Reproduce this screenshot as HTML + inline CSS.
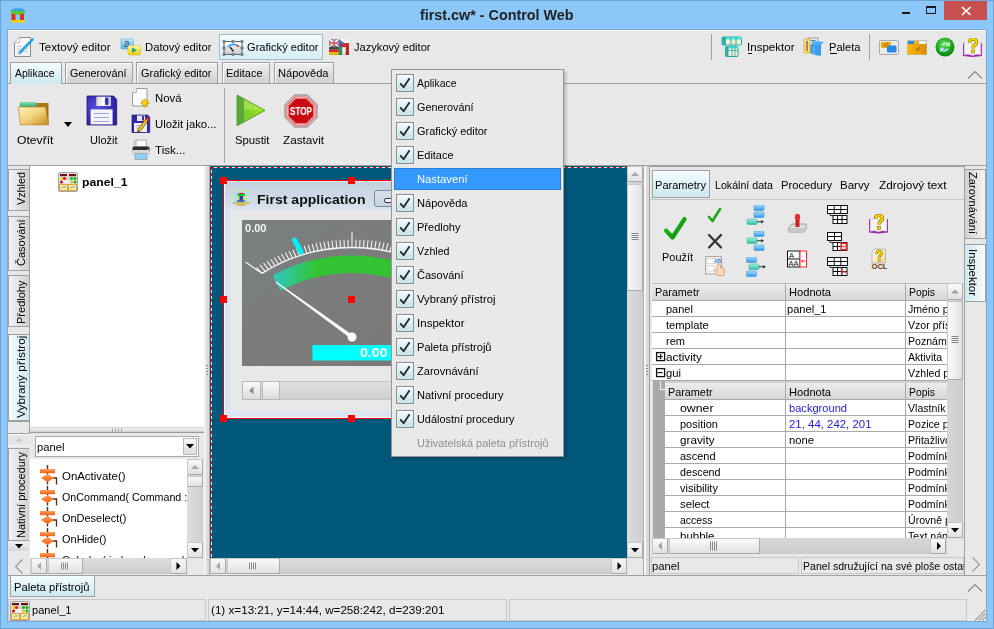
<!DOCTYPE html>
<html><head><meta charset="utf-8"><style>
html,body{margin:0;padding:0;width:994px;height:629px;overflow:hidden;background:#8cc7f9;font-family:"Liberation Sans", sans-serif;}
div,svg{box-sizing:border-box;}
</style></head><body>
<div style="position:absolute;left:0px;top:0px;width:994px;height:629px;border:1px solid #6fa3d6;"></div>
<svg style="position:absolute;left:8px;top:5px;" width="20" height="20" viewBox="0 0 20 20">
<defs><linearGradient id="groof" x1="0" y1="0" x2="0" y2="1"><stop offset="0" stop-color="#50c0f0"/><stop offset="1" stop-color="#2a90d8"/></linearGradient></defs>
<path d="M2.5 6.5 Q4 3 10 2.5 Q16 3 17.5 6.5 Z" fill="url(#groof)"/>
<rect x="3" y="6" width="13.5" height="3.2" fill="#58c828"/>
<rect x="3.5" y="9" width="4" height="6.5" fill="#e83010"/><rect x="12" y="9" width="4" height="6.5" fill="#e83010"/>
<path d="M7.5 9.2 H12 V11.5 Q12 8 9.75 7.5 Q7.5 8 7.5 11.5 Z" fill="#58c828"/>
<rect x="3" y="15" width="14" height="2.6" fill="#f0d010"/></svg>
<div style="position:absolute;left:7px;top:29px;width:980px;height:593px;border:1px solid #79a9d6;"></div>
<div style="position:absolute;left:420px;top:6.0px;height:18px;line-height:18px;font-size:14px;font-weight:bold;color:#222;white-space:nowrap;transform:scaleX(1.0243);transform-origin:0 0;">first.cw* - Control Web</div>
<div style="position:absolute;left:902px;top:12px;width:8px;height:2px;background:#1a1a1a;"></div>
<div style="position:absolute;left:926px;top:6px;width:10px;height:8px;border:1px solid #1a1a1a;border-top:2px solid #1a1a1a;"></div>
<div style="position:absolute;left:944px;top:1px;width:43px;height:19px;background:#c75050;"></div>
<svg style="position:absolute;left:960px;top:5px;" width="12" height="12" viewBox="0 0 12 12"><path d="M2 2 L10.5 10 M10.5 2 L2 10" stroke="#fff" stroke-width="1.7"/></svg>
<div style="position:absolute;left:8px;top:30px;width:978px;height:591px;background:#e8e8e8;border-top:1px solid #fdfdfd;"></div>
<div style="position:absolute;left:39px;top:40.0px;height:14px;line-height:14px;font-size:11.5px;font-weight:normal;color:#000;white-space:nowrap;transform:scaleX(1.0078);transform-origin:0 0;">Textový editor</div>
<div style="position:absolute;left:145px;top:40.0px;height:14px;line-height:14px;font-size:11.5px;font-weight:normal;color:#000;white-space:nowrap;transform:scaleX(0.9815);transform-origin:0 0;">Datový editor</div>
<div style="position:absolute;left:219px;top:34px;width:104px;height:26px;border:1px solid #a4bcc8;background:linear-gradient(#f2fbfe,#d6eef6);"></div>
<div style="position:absolute;left:247px;top:40.0px;height:14px;line-height:14px;font-size:11.5px;font-weight:normal;color:#000;white-space:nowrap;transform:scaleX(0.9645);transform-origin:0 0;">Grafický editor</div>
<div style="position:absolute;left:354px;top:40.0px;height:14px;line-height:14px;font-size:11.5px;font-weight:normal;color:#000;white-space:nowrap;transform:scaleX(0.9653);transform-origin:0 0;">Jazykový editor</div>
<div style="position:absolute;left:711px;top:34px;width:1px;height:26px;background:#a0a0a0;"></div>
<div style="position:absolute;left:747px;top:40.0px;height:14px;line-height:14px;font-size:11.5px;font-weight:normal;color:#000;white-space:nowrap;transform:scaleX(1.0042);transform-origin:0 0;">Inspektor</div>
<div style="position:absolute;left:748px;top:53px;width:4px;height:1px;background:#000;"></div>
<div style="position:absolute;left:829px;top:40.0px;height:14px;line-height:14px;font-size:11.5px;font-weight:normal;color:#000;white-space:nowrap;transform:scaleX(0.9660);transform-origin:0 0;">Paleta</div>
<div style="position:absolute;left:830px;top:53px;width:7px;height:1px;background:#000;"></div>
<div style="position:absolute;left:869px;top:34px;width:1px;height:26px;background:#a0a0a0;"></div>
<div style="position:absolute;left:8px;top:83px;width:978px;height:1px;background:#a0a0a0;"></div>
<div style="position:absolute;left:10px;top:62px;width:52px;height:22px;border:1px solid #a0a0a0;border-bottom:none;background:linear-gradient(#f4fcfe,#cce8f0);"></div>
<div style="position:absolute;left:15px;top:66.0px;height:14px;line-height:14px;font-size:11.5px;font-weight:normal;color:#000;white-space:nowrap;transform:scaleX(0.9087);transform-origin:0 0;">Aplikace</div>
<div style="position:absolute;left:65px;top:62px;width:68px;height:21px;border:1px solid #a0a0a0;border-bottom:none;background:linear-gradient(#f0f0f0,#cfcfcf);box-shadow:inset 1px 1px 0 #fff;"></div>
<div style="position:absolute;left:69.5px;top:66.0px;height:14px;line-height:14px;font-size:11.5px;font-weight:normal;color:#000;white-space:nowrap;transform:scaleX(0.9402);transform-origin:0 0;">Generování</div>
<div style="position:absolute;left:136px;top:62px;width:82px;height:21px;border:1px solid #a0a0a0;border-bottom:none;background:linear-gradient(#f0f0f0,#cfcfcf);box-shadow:inset 1px 1px 0 #fff;"></div>
<div style="position:absolute;left:140.5px;top:66.0px;height:14px;line-height:14px;font-size:11.5px;font-weight:normal;color:#000;white-space:nowrap;transform:scaleX(0.9510);transform-origin:0 0;">Grafický editor</div>
<div style="position:absolute;left:222px;top:62px;width:48px;height:21px;border:1px solid #a0a0a0;border-bottom:none;background:linear-gradient(#f0f0f0,#cfcfcf);box-shadow:inset 1px 1px 0 #fff;"></div>
<div style="position:absolute;left:226px;top:66.0px;height:14px;line-height:14px;font-size:11.5px;font-weight:normal;color:#000;white-space:nowrap;transform:scaleX(0.9516);transform-origin:0 0;">Editace</div>
<div style="position:absolute;left:274px;top:62px;width:60px;height:21px;border:1px solid #a0a0a0;border-bottom:none;background:linear-gradient(#f0f0f0,#cfcfcf);box-shadow:inset 1px 1px 0 #fff;"></div>
<div style="position:absolute;left:277.5px;top:66.0px;height:14px;line-height:14px;font-size:11.5px;font-weight:normal;color:#000;white-space:nowrap;transform:scaleX(0.9632);transform-origin:0 0;">Nápověda</div>
<svg style="position:absolute;left:967px;top:70px;" width="16" height="10" viewBox="0 0 16 10"><path d="M1 8.5 L8 1.5 L15 8.5" stroke="#8a8a8a" stroke-width="1.2" fill="none"/></svg>
<div style="position:absolute;left:17px;top:133.0px;height:14px;line-height:14px;font-size:11.5px;font-weight:normal;color:#000;white-space:nowrap;transform:scaleX(1.0578);transform-origin:0 0;">Otevřít</div>
<div style="position:absolute;left:90px;top:133.0px;height:14px;line-height:14px;font-size:11.5px;font-weight:normal;color:#000;white-space:nowrap;transform:scaleX(0.9563);transform-origin:0 0;">Uložit</div>
<div style="position:absolute;left:154.5px;top:91.0px;height:14px;line-height:14px;font-size:11.5px;font-weight:normal;color:#000;white-space:nowrap;transform:scaleX(0.9871);transform-origin:0 0;">Nová</div>
<div style="position:absolute;left:154.5px;top:117.0px;height:14px;line-height:14px;font-size:11.5px;font-weight:normal;color:#000;white-space:nowrap;transform:scaleX(0.9819);transform-origin:0 0;">Uložit jako...</div>
<div style="position:absolute;left:154.5px;top:143.0px;height:14px;line-height:14px;font-size:11.5px;font-weight:normal;color:#000;white-space:nowrap;transform:scaleX(1.0087);transform-origin:0 0;">Tisk...</div>
<div style="position:absolute;left:224px;top:88px;width:1px;height:75px;background:#a8a8a8;"></div>
<div style="position:absolute;left:235px;top:133.0px;height:14px;line-height:14px;font-size:11.5px;font-weight:normal;color:#000;white-space:nowrap;transform:scaleX(0.9813);transform-origin:0 0;">Spustit</div>
<div style="position:absolute;left:282.5px;top:133.0px;height:14px;line-height:14px;font-size:11.5px;font-weight:normal;color:#000;white-space:nowrap;transform:scaleX(1.0183);transform-origin:0 0;">Zastavit</div>
<svg style="position:absolute;left:64px;top:122px;" width="9" height="6" viewBox="0 0 9 6"><path d="M0 0 H8 L4 5 Z" fill="#000"/></svg>
<div style="position:absolute;left:8px;top:165px;width:978px;height:1px;background:#a0a0a0;"></div>
<div style="position:absolute;left:8px;top:166px;width:22px;height:409px;background:#e8e8e8;"></div>
<div style="position:absolute;left:29px;top:166px;width:1px;height:262px;background:#a0a0a0;"></div>
<div style="position:absolute;left:8px;top:169px;width:21px;height:42px;border:1px solid #a0a0a0;border-right:none;background:linear-gradient(90deg,#f4f4f4,#d0d0d0);"></div>
<div style="position:absolute;left:25px;top:204.5px;width:0;height:0;transform:rotate(-90deg);transform-origin:0 0;"><div style="position:absolute;left:0px;top:-11.0px;height:14px;line-height:14px;font-size:11.5px;font-weight:normal;color:#000;white-space:nowrap;transform:scaleX(0.9385);transform-origin:0 0;">Vzhled</div></div>
<div style="position:absolute;left:8px;top:216px;width:21px;height:55px;border:1px solid #a0a0a0;border-right:none;background:linear-gradient(90deg,#f4f4f4,#d0d0d0);"></div>
<div style="position:absolute;left:25px;top:266px;width:0;height:0;transform:rotate(-90deg);transform-origin:0 0;"><div style="position:absolute;left:0px;top:-11.0px;height:14px;line-height:14px;font-size:11.5px;font-weight:normal;color:#000;white-space:nowrap;transform:scaleX(0.9571);transform-origin:0 0;">Časování</div></div>
<div style="position:absolute;left:8px;top:275px;width:21px;height:52px;border:1px solid #a0a0a0;border-right:none;background:linear-gradient(90deg,#f4f4f4,#d0d0d0);"></div>
<div style="position:absolute;left:25px;top:324px;width:0;height:0;transform:rotate(-90deg);transform-origin:0 0;"><div style="position:absolute;left:0px;top:-11.0px;height:14px;line-height:14px;font-size:11.5px;font-weight:normal;color:#000;white-space:nowrap;transform:scaleX(0.9584);transform-origin:0 0;">Předlohy</div></div>
<div style="position:absolute;left:8px;top:334px;width:21px;height:87px;border:1px solid #a0a0a0;border-right:none;background:linear-gradient(90deg,#f6fcfe,#cfe9f1);"></div>
<div style="position:absolute;left:25px;top:418px;width:0;height:0;transform:rotate(-90deg);transform-origin:0 0;"><div style="position:absolute;left:0px;top:-11.0px;height:14px;line-height:14px;font-size:11.5px;font-weight:normal;color:#000;white-space:nowrap;transform:scaleX(1.0299);transform-origin:0 0;">Vybraný přístroj</div></div>
<div style="position:absolute;left:30px;top:166px;width:175px;height:261px;background:#fff;"></div>
<div style="position:absolute;left:82px;top:175.0px;height:14px;line-height:14px;font-size:11.5px;font-weight:bold;color:#000;white-space:nowrap;transform:scaleX(1.0624);transform-origin:0 0;">panel_1</div>
<div style="position:absolute;left:30px;top:427px;width:175px;height:6px;background:linear-gradient(#d4d4d4 0 1px,#f4f4f4 1px,#dcdcdc 4px,#c8c8c8 5px,#9a9a9a 5px);"></div>
<div style="position:absolute;left:8px;top:432px;width:22px;height:126px;background:#e8e8e8;"></div>
<div style="position:absolute;left:8px;top:448px;width:21px;height:93px;border:1px solid #a0a0a0;border-right:none;background:linear-gradient(90deg,#f4f4f4,#d0d0d0);"></div>
<div style="position:absolute;left:25px;top:537.5px;width:0;height:0;transform:rotate(-90deg);transform-origin:0 0;"><div style="position:absolute;left:0px;top:-11.0px;height:14px;line-height:14px;font-size:11.5px;font-weight:normal;color:#000;white-space:nowrap;transform:scaleX(0.9542);transform-origin:0 0;">Nativní procedury</div></div>
<div style="position:absolute;left:8px;top:421px;width:22px;height:13px;border-top:1px solid #a0a0a0;border-bottom:1px solid #a0a0a0;border-right:1px solid #a0a0a0;background:#e8e8e8;"></div>
<div style="position:absolute;left:8px;top:434px;width:21px;height:12px;background:#e6e6e6;border-top:1px solid #f8f8f8;border-bottom:1px solid #f8f8f8;"></div>
<svg style="position:absolute;left:10px;top:434px;" width="18" height="10" viewBox="0 0 18 10"><path d="M5 7.5 H13 L9 4 Z" fill="#c8c8c8"/></svg>
<div style="position:absolute;left:9px;top:542px;width:20px;height:9px;background:linear-gradient(#f0f0f0,#d6d6d6);"></div>
<svg style="position:absolute;left:10px;top:542px;" width="18" height="9" viewBox="0 0 18 9"><path d="M5 2 H13 L9 6.5 Z" fill="#000"/></svg>
<div style="position:absolute;left:35px;top:436px;width:164px;height:21px;background:#fff;border:1px solid #a9a9a9;"></div>
<div style="position:absolute;left:37px;top:440.0px;height:14px;line-height:14px;font-size:11.5px;font-weight:normal;color:#000;white-space:nowrap;transform:scaleX(0.9773);transform-origin:0 0;">panel</div>
<div style="position:absolute;left:183px;top:438px;width:14px;height:17px;border:1px solid #b8b8b8;background:linear-gradient(#f6f6f6,#dedede);"></div>
<svg style="position:absolute;left:184px;top:440px;" width="12" height="12" viewBox="0 0 12 12"><path d="M2 4 H10 L6 8.5 Z" fill="#000"/></svg>
<div style="position:absolute;left:30px;top:459px;width:157px;height:99px;background:#fff;"></div>
<div style="position:absolute;left:30px;top:459px;width:157px;height:99px;overflow:hidden;">
<svg style="position:absolute;left:8px;top:5px;" width="20" height="21" viewBox="0 0 20 21"><defs><linearGradient id="gob" x1="0" y1="0" x2="0" y2="1"><stop offset="0" stop-color="#ffa060"/><stop offset="1" stop-color="#f06010"/></linearGradient></defs>
<path d="M9.5 1 V20.5" stroke="#5a2a10" stroke-width="1.4" stroke-dasharray="4 1.5"/>
<path d="M15 14 H18.5 V20.5" stroke="#5a2a10" stroke-width="1.3" fill="none"/>
<rect x="2" y="5" width="15" height="4.2" fill="url(#gob)"/>
<path d="M3 14 L9.5 10 L16 14 L9.5 18 Z" fill="url(#gob)"/></svg>
<div style="position:absolute;left:31.5px;top:9.5px;height:14px;line-height:14px;font-size:11.5px;font-weight:normal;color:#000;white-space:nowrap;transform:scaleX(0.9936);transform-origin:0 0;">OnActivate()</div>
<svg style="position:absolute;left:8px;top:26px;" width="20" height="21" viewBox="0 0 20 21"><defs><linearGradient id="gob" x1="0" y1="0" x2="0" y2="1"><stop offset="0" stop-color="#ffa060"/><stop offset="1" stop-color="#f06010"/></linearGradient></defs>
<path d="M9.5 1 V20.5" stroke="#5a2a10" stroke-width="1.4" stroke-dasharray="4 1.5"/>
<path d="M15 14 H18.5 V20.5" stroke="#5a2a10" stroke-width="1.3" fill="none"/>
<rect x="2" y="5" width="15" height="4.2" fill="url(#gob)"/>
<path d="M3 14 L9.5 10 L16 14 L9.5 18 Z" fill="url(#gob)"/></svg>
<div style="position:absolute;left:31.5px;top:30.5px;height:14px;line-height:14px;font-size:11.5px;font-weight:normal;color:#000;white-space:nowrap;transform:scaleX(0.9287);transform-origin:0 0;">OnCommand( Command : string )</div>
<svg style="position:absolute;left:8px;top:47px;" width="20" height="21" viewBox="0 0 20 21"><defs><linearGradient id="gob" x1="0" y1="0" x2="0" y2="1"><stop offset="0" stop-color="#ffa060"/><stop offset="1" stop-color="#f06010"/></linearGradient></defs>
<path d="M9.5 1 V20.5" stroke="#5a2a10" stroke-width="1.4" stroke-dasharray="4 1.5"/>
<path d="M15 14 H18.5 V20.5" stroke="#5a2a10" stroke-width="1.3" fill="none"/>
<rect x="2" y="5" width="15" height="4.2" fill="url(#gob)"/>
<path d="M3 14 L9.5 10 L16 14 L9.5 18 Z" fill="url(#gob)"/></svg>
<div style="position:absolute;left:31.5px;top:51.5px;height:14px;line-height:14px;font-size:11.5px;font-weight:normal;color:#000;white-space:nowrap;transform:scaleX(0.9521);transform-origin:0 0;">OnDeselect()</div>
<svg style="position:absolute;left:8px;top:68px;" width="20" height="21" viewBox="0 0 20 21"><defs><linearGradient id="gob" x1="0" y1="0" x2="0" y2="1"><stop offset="0" stop-color="#ffa060"/><stop offset="1" stop-color="#f06010"/></linearGradient></defs>
<path d="M9.5 1 V20.5" stroke="#5a2a10" stroke-width="1.4" stroke-dasharray="4 1.5"/>
<path d="M15 14 H18.5 V20.5" stroke="#5a2a10" stroke-width="1.3" fill="none"/>
<rect x="2" y="5" width="15" height="4.2" fill="url(#gob)"/>
<path d="M3 14 L9.5 10 L16 14 L9.5 18 Z" fill="url(#gob)"/></svg>
<div style="position:absolute;left:31.5px;top:72.5px;height:14px;line-height:14px;font-size:11.5px;font-weight:normal;color:#000;white-space:nowrap;transform:scaleX(0.9539);transform-origin:0 0;">OnHide()</div>
<svg style="position:absolute;left:8px;top:89px;" width="20" height="21" viewBox="0 0 20 21"><defs><linearGradient id="gob" x1="0" y1="0" x2="0" y2="1"><stop offset="0" stop-color="#ffa060"/><stop offset="1" stop-color="#f06010"/></linearGradient></defs>
<path d="M9.5 1 V20.5" stroke="#5a2a10" stroke-width="1.4" stroke-dasharray="4 1.5"/>
<path d="M15 14 H18.5 V20.5" stroke="#5a2a10" stroke-width="1.3" fill="none"/>
<rect x="2" y="5" width="15" height="4.2" fill="url(#gob)"/>
<path d="M3 14 L9.5 10 L16 14 L9.5 18 Z" fill="url(#gob)"/></svg>
<div style="position:absolute;left:31.5px;top:93.5px;height:14px;line-height:14px;font-size:11.5px;font-weight:normal;color:#000;white-space:nowrap;transform:scaleX(0.9287);transform-origin:0 0;">OnIndex( index : longcard )</div>
</div>
<div style="position:absolute;left:187px;top:459px;width:16px;height:99px;background:linear-gradient(90deg,#dedede,#cfcfcf);"></div>
<div style="position:absolute;left:187px;top:459px;width:16px;height:16px;background:linear-gradient(#f8f8f8,#e2e2e2);border:1px solid #c8c8c8;border-right-color:#aaa;border-bottom-color:#aaa;"></div>
<div style="position:absolute;left:187px;top:476px;width:16px;height:11px;background:linear-gradient(#f8f8f8,#e2e2e2);border:1px solid #c8c8c8;border-right-color:#aaa;border-bottom-color:#aaa;"></div>
<div style="position:absolute;left:187px;top:542px;width:16px;height:16px;background:linear-gradient(#f8f8f8,#e2e2e2);border:1px solid #c8c8c8;border-right-color:#aaa;border-bottom-color:#aaa;"></div>
<div style="position:absolute;left:30px;top:558px;width:157px;height:16px;background:linear-gradient(#dcdcdc,#cdcdcd);"></div>
<div style="position:absolute;left:31px;top:558px;width:16px;height:16px;background:linear-gradient(#f8f8f8,#e2e2e2);border:1px solid #c8c8c8;border-right-color:#aaa;border-bottom-color:#aaa;"></div>
<div style="position:absolute;left:48px;top:558px;width:35px;height:16px;background:linear-gradient(#f8f8f8,#e2e2e2);border:1px solid #c8c8c8;border-right-color:#aaa;border-bottom-color:#aaa;"></div>
<div style="position:absolute;left:170px;top:558px;width:17px;height:16px;background:linear-gradient(#f8f8f8,#e2e2e2);border:1px solid #c8c8c8;border-right-color:#aaa;border-bottom-color:#aaa;"></div>
<div style="position:absolute;left:187px;top:558px;width:16px;height:16px;background:#e8e8e8;"></div>
<div style="position:absolute;left:204px;top:166px;width:6px;height:409px;background:linear-gradient(90deg,#f2f2f2 0 2px,#dcdcdc 2px 5px,#a8a8a8 5px);"></div>
<div style="position:absolute;left:210px;top:166px;width:417px;height:392px;background:#02587a;"></div>
<div style="position:absolute;left:627px;top:166px;width:16px;height:392px;background:linear-gradient(90deg,#dcdcdc,#cdcdcd);"></div>
<div style="position:absolute;left:627px;top:166px;width:16px;height:16px;background:linear-gradient(#f8f8f8,#e2e2e2);border:1px solid #c8c8c8;border-right-color:#aaa;border-bottom-color:#aaa;"></div>
<div style="position:absolute;left:627px;top:184px;width:16px;height:107px;background:linear-gradient(90deg,#f8f8f8,#e2e2e2);border:1px solid #c8c8c8;border-right-color:#aaa;border-bottom-color:#aaa;"></div>
<div style="position:absolute;left:627px;top:542px;width:16px;height:16px;background:linear-gradient(#f8f8f8,#e2e2e2);border:1px solid #c8c8c8;border-right-color:#aaa;border-bottom-color:#aaa;"></div>
<div style="position:absolute;left:210px;top:558px;width:417px;height:16px;background:linear-gradient(#dcdcdc,#cdcdcd);"></div>
<div style="position:absolute;left:210px;top:558px;width:16px;height:16px;background:linear-gradient(#f8f8f8,#e2e2e2);border:1px solid #c8c8c8;border-right-color:#aaa;border-bottom-color:#aaa;"></div>
<div style="position:absolute;left:227px;top:558px;width:53px;height:16px;background:linear-gradient(#f8f8f8,#e2e2e2);border:1px solid #c8c8c8;border-right-color:#aaa;border-bottom-color:#aaa;"></div>
<div style="position:absolute;left:611px;top:558px;width:16px;height:16px;background:linear-gradient(#f8f8f8,#e2e2e2);border:1px solid #c8c8c8;border-right-color:#aaa;border-bottom-color:#aaa;"></div>
<div style="position:absolute;left:627px;top:558px;width:16px;height:16px;background:#e8e8e8;"></div>
<div style="position:absolute;left:643px;top:166px;width:7px;height:409px;background:linear-gradient(90deg,#b0b0b0 0 1px,#f6f6f6 1px 3px,#dadada 3px 6px,#a0a0a0 6px);"></div>
<div style="position:absolute;left:8px;top:575px;width:978px;height:1px;background:#a0a0a0;"></div>
<div style="position:absolute;left:650px;top:166px;width:315px;height:409px;background:#e8e8e8;border-top:1px solid #a0a0a0;"></div>
<div style="position:absolute;left:652px;top:170px;width:58px;height:28px;border:1px solid #a0a0a0;background:linear-gradient(#f4fcfe,#cce8f0);"></div>
<div style="position:absolute;left:654.5px;top:178.0px;height:14px;line-height:14px;font-size:11.5px;font-weight:normal;color:#000;white-space:nowrap;transform:scaleX(0.9615);transform-origin:0 0;">Parametry</div>
<div style="position:absolute;left:714.5px;top:178.0px;height:14px;line-height:14px;font-size:11.5px;font-weight:normal;color:#000;white-space:nowrap;transform:scaleX(0.9256);transform-origin:0 0;">Lokální data</div>
<div style="position:absolute;left:781px;top:178.0px;height:14px;line-height:14px;font-size:11.5px;font-weight:normal;color:#000;white-space:nowrap;transform:scaleX(0.9730);transform-origin:0 0;">Procedury</div>
<div style="position:absolute;left:840px;top:178.0px;height:14px;line-height:14px;font-size:11.5px;font-weight:normal;color:#000;white-space:nowrap;transform:scaleX(1.0035);transform-origin:0 0;">Barvy</div>
<div style="position:absolute;left:879px;top:178.0px;height:14px;line-height:14px;font-size:11.5px;font-weight:normal;color:#000;white-space:nowrap;transform:scaleX(1.0254);transform-origin:0 0;">Zdrojový text</div>
<div style="position:absolute;left:650px;top:199px;width:315px;height:1px;background:#c8c8c8;"></div>
<div style="position:absolute;left:661.5px;top:250.0px;height:14px;line-height:14px;font-size:11.5px;font-weight:normal;color:#000;white-space:nowrap;transform:scaleX(0.9509);transform-origin:0 0;">Použít</div>
<div style="position:absolute;left:652px;top:283px;width:295px;height:255px;background:#fff;"></div>
<div style="position:absolute;left:947px;top:283px;width:16px;height:255px;background:linear-gradient(90deg,#dcdcdc,#cdcdcd);"></div>
<div style="position:absolute;left:964px;top:166px;width:22px;height:409px;background:#e8e8e8;border-left:1px solid #a0a0a0;"></div>
<div style="position:absolute;left:10px;top:576px;width:85px;height:21px;border:1px solid #a0a0a0;border-top:none;background:linear-gradient(#f4fcfe,#cce8f0);"></div>
<div style="position:absolute;left:14px;top:580.0px;height:14px;line-height:14px;font-size:11.5px;font-weight:normal;color:#000;white-space:nowrap;transform:scaleX(0.9762);transform-origin:0 0;">Paleta přístrojů</div>
<div style="position:absolute;left:8px;top:599px;width:978px;height:22px;background:#e8e8e8;"></div>
<div style="position:absolute;left:8px;top:599px;width:198px;height:22px;border:1px solid #c8c8c8;"></div>
<div style="position:absolute;left:208px;top:599px;width:299px;height:22px;border:1px solid #c8c8c8;"></div>
<div style="position:absolute;left:509px;top:599px;width:458px;height:22px;border:1px solid #c8c8c8;"></div>
<div style="position:absolute;left:32px;top:603.0px;height:14px;line-height:14px;font-size:11.5px;font-weight:normal;color:#000;white-space:nowrap;transform:scaleX(0.9651);transform-origin:0 0;">panel_1</div>
<div style="position:absolute;left:211px;top:603.0px;height:14px;line-height:14px;font-size:11.5px;font-weight:normal;color:#000;white-space:nowrap;transform:scaleX(1.0144);transform-origin:0 0;">(1) x=13:21, y=14:44, w=258:242, d=239:201</div>
<svg style="position:absolute;left:13px;top:36px;" width="22" height="22" viewBox="0 0 22 22">
<defs><linearGradient id="gdoc" x1="0" y1="0" x2="0" y2="1"><stop offset="0" stop-color="#fdfdfd"/><stop offset="1" stop-color="#f0f0f0"/></linearGradient></defs>
<path d="M6.5 1.5 H17.5 V20.5 H1.5 V6.5 Z" fill="url(#gdoc)" stroke="#8d8d8d" stroke-width="1"/>
<path d="M1.5 6.5 H6.5 V1.5" fill="#fff" stroke="#bdbdbd" stroke-width="1"/>
<path d="M4 10.5 H9 M4 13 H15 M4 15.5 H15 M4 18 H8" stroke="#c9c9c9" stroke-width="1"/>
<path d="M7 16.5 L19.5 3.5" stroke="#2aa6df" stroke-width="2.6" stroke-linecap="round"/></svg>
<svg style="position:absolute;left:120px;top:38px;" width="22" height="18" viewBox="0 0 22 18">
<defs><linearGradient id="gda" x1="0" y1="0" x2="0" y2="1"><stop offset="0" stop-color="#c6e8f7"/><stop offset="1" stop-color="#4fb1e1"/></linearGradient>
<linearGradient id="gdy" x1="0" y1="0" x2="0" y2="1"><stop offset="0" stop-color="#fff6a8"/><stop offset="1" stop-color="#f0d000"/></linearGradient></defs>
<rect x="1" y="1" width="12.5" height="10" rx="1" fill="url(#gda)" stroke="#6ab0d6" stroke-width=".6"/>
<text x="4" y="9" font-family="Liberation Sans" font-size="10" fill="#1a4d80">a</text>
<rect x="8" y="7.5" width="12.5" height="9.5" rx="1" fill="url(#gdy)" stroke="#d9b94a" stroke-width=".6"/>
<path d="M12 9.5 L17 12.3 L12 15 Z" fill="#24a592"/></svg>
<svg style="position:absolute;left:222px;top:40px;" width="22" height="16" viewBox="0 0 22 16">
<defs><linearGradient id="ggr" x1="0" y1="0" x2="0" y2="1"><stop offset="0" stop-color="#ffffff"/><stop offset="1" stop-color="#c8c8c8"/></linearGradient></defs>
<rect x="2" y="1.5" width="18" height="13" fill="url(#ggr)" stroke="#5a6a6a" stroke-width="1"/>
<path d="M5.5 7 Q10 3 14.5 5" stroke="#2a9df4" stroke-width="1.6" fill="none"/>
<path d="M14.5 5 L17 7" stroke="#e02020" stroke-width="1.6"/>
<path d="M8 7 L11.5 11.5" stroke="#222" stroke-width="1.3"/>
<g fill="#7fa8a8" stroke="#3e5252" stroke-width=".6"><circle cx="2" cy="1.5" r="1.3"/><circle cx="11" cy="1.5" r="1.3"/><circle cx="20" cy="1.5" r="1.3"/><circle cx="2" cy="8" r="1.3"/><circle cx="20" cy="8" r="1.3"/><circle cx="2" cy="14.5" r="1.3"/><circle cx="11" cy="14.5" r="1.3"/><circle cx="20" cy="14.5" r="1.3"/></g></svg>
<svg style="position:absolute;left:329px;top:39px;" width="20" height="16" viewBox="0 0 20 16">
<rect x="0" y="0" width="10" height="8" fill="#2a3f9a"/>
<path d="M0 0 L10 8 M10 0 L0 8" stroke="#fff" stroke-width="1.6"/>
<path d="M5 0 V8 M0 4 H10" stroke="#fff" stroke-width="2.6"/><path d="M5 0 V8 M0 4 H10" stroke="#d42a2a" stroke-width="1.4"/>
<rect x="10" y="0" width="10" height="4" fill="#f4f4f4"/><rect x="10" y="4" width="10" height="4" fill="#d01c1c"/>
<path d="M10 0 L15 4 L10 8 Z" fill="#2e4eb8"/>
<rect x="0" y="8" width="10" height="2.7" fill="#444"/><rect x="0" y="10.7" width="10" height="2.6" fill="#e21d1d"/><rect x="0" y="13.3" width="10" height="2.7" fill="#f5cf00"/>
<rect x="10" y="8" width="3.4" height="8" fill="#2a9a4a"/><rect x="13.4" y="8" width="3.3" height="8" fill="#f6f6f6"/><rect x="16.7" y="8" width="3.3" height="8" fill="#c82020"/>
<path d="M0 8 H20 M10 0 V16" stroke="#777" stroke-width=".6" opacity=".7"/>
<rect x="0" y="0" width="20" height="16" fill="url(#gflag)"/>
<defs><linearGradient id="gflag" x1="0" y1="0" x2="0" y2="1"><stop offset="0" stop-color="#fff" stop-opacity=".25"/><stop offset=".5" stop-color="#fff" stop-opacity="0"/><stop offset="1" stop-color="#000" stop-opacity=".15"/></linearGradient></defs></svg>
<svg style="position:absolute;left:721px;top:36px;" width="22" height="22" viewBox="0 0 22 22">
<rect x="1" y="1" width="19.5" height="8" rx="1" fill="#f2f0d8" stroke="#2aa8a0" stroke-width="1"/>
<rect x="1" y="1" width="19.5" height="2.5" fill="#4ee3e0"/><rect x="1" y="1" width="4" height="8" fill="#2bb3a8"/>
<path d="M10 1 V9 M15 1 V9" stroke="#2aa8a0" stroke-width="1"/>
<rect x="4.5" y="10.5" width="12.5" height="10" rx="1" fill="#f2f0d8" stroke="#2aa8a0" stroke-width="1"/>
<rect x="4.5" y="10.5" width="12.5" height="2" fill="#4ee3e0"/><rect x="4.5" y="10.5" width="3" height="10" fill="#2bb3a8"/>
<path d="M11 10.5 V20.5 M14 10.5 V20.5 M4.5 14.5 H17" stroke="#2aa8a0" stroke-width=".8"/></svg>
<svg style="position:absolute;left:802px;top:36px;" width="24" height="22" viewBox="0 0 24 22">
<rect x="6" y="2" width="10" height="8" fill="#f4f4f4" stroke="#9a9a9a" stroke-width="1"/>
<path d="M7.5 4.5 H14" stroke="#3aa0f0" stroke-width="1.2"/><path d="M11 4.5 V9" stroke="#444" stroke-width="1"/>
<path d="M7 9 H19 L22 6 L14 5 Z" fill="#4ab0f8"/>
<path d="M7 9 H19 V20 L13 19 L8 17 Z" fill="#3a9cf0"/><path d="M12 10 V19" stroke="#7fd0ff" stroke-width="1"/>
<rect x="2" y="3" width="6" height="14" rx="1" fill="#f8e870" stroke="#e0b040" stroke-width="1"/>
<rect x="4" y="5" width="2" height="10" fill="#e06a60"/><rect x="4" y="5" width="2" height="2.5" fill="#6a8ad0"/></svg>
<svg style="position:absolute;left:879px;top:40px;" width="20" height="15" viewBox="0 0 20 15">
<rect x="0.5" y="0.5" width="19" height="14" rx="1" fill="#ececec" stroke="#a8a8a8" stroke-width="1"/>
<rect x="2" y="2" width="10" height="6" rx="1" fill="#f0a800"/>
<path d="M4.5 4.5 L6 6 L8.5 2.5" stroke="#555" stroke-width=".9" fill="none"/>
<rect x="8" y="5.5" width="9.5" height="7" rx="1" fill="#2a86e8"/></svg>
<svg style="position:absolute;left:907px;top:40px;" width="20" height="15" viewBox="0 0 20 15">
<rect x="0.5" y="0.5" width="19" height="14" fill="#f4f4f4" stroke="#bdbdbd" stroke-width="1"/>
<rect x="1" y="1" width="6" height="3" fill="#2a86e8"/><rect x="7" y="1" width="5" height="3" fill="#f0b000"/>
<defs><linearGradient id="gfo" x1="0" y1="0" x2="1" y2="0"><stop offset="0" stop-color="#ffb400"/><stop offset="1" stop-color="#d89000"/></linearGradient></defs>
<rect x="0.5" y="4" width="19" height="10.5" fill="url(#gfo)"/>
<path d="M9 9 L10.5 10.5 L12.5 7" stroke="#555" stroke-width=".9" fill="none"/></svg>
<svg style="position:absolute;left:935px;top:37px;" width="20" height="20" viewBox="0 0 20 20">
<defs><radialGradient id="ggc" cx=".45" cy=".35" r=".65"><stop offset="0" stop-color="#6ee06e"/><stop offset=".6" stop-color="#1faa1f"/><stop offset="1" stop-color="#0a820a"/></radialGradient></defs>
<circle cx="10" cy="10" r="9.5" fill="url(#ggc)"/>
<path d="M6 8 Q9 4 13.5 6 L15 4.5 L15 9.5 L10.5 9 L12 7.5 Q9.5 6.5 7.5 9 Z" fill="#b8f0b8"/>
<path d="M14 12 Q11 16 6.5 14 L5 15.5 L5 10.5 L9.5 11 L8 12.5 Q10.5 13.5 12.5 11 Z" fill="#b0dcf4"/></svg>
<svg style="position:absolute;left:962px;top:38px;" width="22" height="20" viewBox="0 0 22 20">
<path d="M1 5 L10.5 7 L20 5 V18 L10.5 19 L1 18 Z" fill="#a020b0"/>
<path d="M2.2 5 Q6 3 10.5 6 Q15 3 18.8 5 V17 Q15 15.5 10.5 17.5 Q6 15.5 2.2 17 Z" fill="#f4f4f4" stroke="#c8c8c8" stroke-width=".5"/>
<path d="M7.5 5 Q7.5 1 11 1 Q14.5 1 14.5 4.5 Q14.5 6.5 12 7.5 Q11 8 11 10.5" stroke="#8a6a00" stroke-width="3.2" fill="none"/>
<path d="M7.5 5 Q7.5 1 11 1 Q14.5 1 14.5 4.5 Q14.5 6.5 12 7.5 Q11 8 11 10.5" stroke="#ffd800" stroke-width="2" fill="none"/>
<rect x="9.5" y="12" width="3" height="3" fill="#ffd800" stroke="#8a6a00" stroke-width=".6"/></svg>
<svg style="position:absolute;left:16px;top:100px;" width="36" height="28" viewBox="0 0 36 28">
<defs><linearGradient id="gfold" x1="0" y1="0" x2="1" y2="1"><stop offset="0" stop-color="#fdf2c0"/><stop offset=".5" stop-color="#f1d27a"/><stop offset="1" stop-color="#c88a20"/></linearGradient>
<linearGradient id="gfb" x1="0" y1="0" x2="0" y2="1"><stop offset="0" stop-color="#b07818"/><stop offset="1" stop-color="#8a5a10"/></linearGradient>
<linearGradient id="gtab" x1="0" y1="0" x2="0" y2="1"><stop offset="0" stop-color="#7fe0b0"/><stop offset="1" stop-color="#2aaa70"/></linearGradient></defs>
<path d="M19.5 3 H32.5 V24.8 H19.5 Z" fill="url(#gfb)"/>
<rect x="3.7" y="2" width="16.5" height="5.5" rx="1" fill="url(#gtab)"/>
<path d="M2.3 7 H29.5 L32.5 24.8 H4.5 Z" fill="url(#gfold)" stroke="#b8862a" stroke-width=".7"/></svg>
<svg style="position:absolute;left:86px;top:95px;" width="32" height="32" viewBox="0 0 32 32">
<defs><radialGradient id="gfl" cx=".35" cy=".4" r=".7"><stop offset="0" stop-color="#5a50e8"/><stop offset="1" stop-color="#2a1c9a"/></radialGradient>
<linearGradient id="gsh" x1="0" y1="0" x2="1" y2="0"><stop offset="0" stop-color="#d8d8d8"/><stop offset=".5" stop-color="#ffffff"/><stop offset="1" stop-color="#c8c8c8"/></linearGradient></defs>
<path d="M1 1 H27.5 L30.7 4.5 V30 H1 Z" fill="url(#gfl)" stroke="#1e1670" stroke-width=".8"/>
<rect x="10.3" y="1.7" width="14.7" height="9.3" fill="url(#gsh)"/>
<rect x="19" y="2.5" width="3.5" height="7.5" rx="1.2" fill="#3030d0"/>
<rect x="4.6" y="14.4" width="22" height="15" fill="#f4f4f4"/>
<path d="M8 18.5 H23 M8 22.5 H23 M8 26.5 H23" stroke="#9aa0e0" stroke-width="1"/></svg>
<svg style="position:absolute;left:131px;top:87px;" width="20" height="22" viewBox="0 0 20 22">
<path d="M5.5 1.5 H16 V19 H1.5 V5.5 Z" fill="#fafafa" stroke="#9a9a9a" stroke-width="1"/>
<path d="M1.5 5.5 H5.5 V1.5" fill="#fff" stroke="#b8b8b8" stroke-width="1"/>
<g stroke="#d0a000" stroke-width="1.3"><path d="M14 11.5 V20.5 M9.5 16 H18.5 M10.8 12.8 L17.2 19.2 M17.2 12.8 L10.8 19.2"/></g>
<circle cx="14" cy="16" r="2" fill="#f8d800"/></svg>
<svg style="position:absolute;left:131px;top:114px;" width="20" height="20" viewBox="0 0 20 20">
<path d="M1 1 H16.5 L18.7 3 V18.5 H1 Z" fill="#3328a8" stroke="#1e1670" stroke-width=".7"/>
<rect x="6" y="1.5" width="8" height="5.5" fill="#e8e8e8"/><rect x="11" y="2" width="2" height="4.5" fill="#3030d0"/>
<rect x="3" y="9" width="13" height="9" fill="#f0f0f0"/>
<path d="M5 11.5 H13 M5 14 H13" stroke="#9aa0e0" stroke-width=".8"/>
<path d="M7.5 17 L16.5 5" stroke="#6a4a00" stroke-width="3.6" stroke-linecap="butt"/>
<path d="M7.5 17 L16.5 5" stroke="#f4c020" stroke-width="2.4"/>
<path d="M15.5 6.3 L17.3 4" stroke="#e03030" stroke-width="3"/>
<path d="M6.5 18.5 L7.8 16.6" stroke="#333" stroke-width="1.5"/></svg>
<svg style="position:absolute;left:131px;top:139px;" width="20" height="22" viewBox="0 0 20 22">
<path d="M5 1 H15.5 V8 H5 Z" fill="#f8f8f8" stroke="#a0a0a0" stroke-width=".8"/>
<path d="M5 1 L3 4 V8" fill="none" stroke="#a0a0a0" stroke-width=".8"/>
<rect x="1.5" y="7.5" width="17" height="6.5" rx="1.5" fill="#2a2a2a"/>
<rect x="1.5" y="11" width="17" height="5" fill="#d8d8d8"/>
<rect x="16" y="8.5" width="1.5" height="1.2" fill="#e02020"/><rect x="16" y="10" width="1.5" height="1" fill="#20c020"/>
<rect x="4" y="14.5" width="12" height="6" fill="#8ad0f0" stroke="#909090" stroke-width=".6"/></svg>
<svg style="position:absolute;left:235px;top:93px;" width="32" height="35" viewBox="0 0 32 35">
<defs><linearGradient id="gpl" x1="0" y1="0" x2="1" y2="0"><stop offset="0" stop-color="#6cc040"/><stop offset="1" stop-color="#a0e810"/></linearGradient></defs>
<path d="M2 2 L30 17.4 L2 32.8 Z" fill="url(#gpl)" stroke="#3e8a20" stroke-width=".8"/>
<path d="M2 2 L9 5.8 V29 L2 32.8 Z" fill="#5aa838"/>
<path d="M9 6 L28 17 L9 17 Z" fill="#c8f060" opacity=".45"/></svg>
<svg style="position:absolute;left:284px;top:94px;" width="34" height="34" viewBox="0 0 34 34">
<path d="M10.5 1 H23.5 L33 10.5 V23.5 L23.5 33 H10.5 L1 23.5 V10.5 Z" fill="#d8d8d8" stroke="#7a5a5a" stroke-width=".8"/>
<path d="M11 2.5 H23 L31.5 11 V23 L23 31.5 H11 L2.5 23 V11 Z" fill="#e05050"/>
<path d="M11.5 3.8 H22.5 L30.2 11.5 V22.5 L22.5 30.2 H11.5 L3.8 22.5 V11.5 Z" fill="none" stroke="#f8d8d8" stroke-width="1"/>
<path d="M12 5 H22 L29 12 V22 L22 29 H12 L5 22 V12 Z" fill="#cc0a14"/>
<text x="17" y="21" text-anchor="middle" font-family="Liberation Sans" font-weight="bold" font-size="10" fill="#fff" textLength="22" lengthAdjust="spacingAndGlyphs">STOP</text></svg>
<div style="position:absolute;left:211px;top:167px;width:416px;height:1px;background:repeating-linear-gradient(90deg,#ff0000 0 3px,#ffffff 3px 6px);"></div>
<div style="position:absolute;left:211px;top:167px;width:1px;height:391px;background:repeating-linear-gradient(180deg,#ff0000 0 3px,#ffffff 3px 6px);"></div>
<div style="position:absolute;left:224px;top:181px;width:255px;height:237px;background:linear-gradient(#c3d0de 0px,#d2dde9 20px,#dae5f1 29px,#dae5f1 100%);border-left:1px solid #eef6fc;border-top:1px solid #e0ecf6;border-bottom:1px solid #f4f8fc;"></div>
<div style="position:absolute;left:231px;top:210px;width:241px;height:201px;background:#e8e8e8;"></div>
<svg style="position:absolute;left:233px;top:190px;" width="17" height="17" viewBox="0 0 17 17">
<rect x="0.5" y="0.5" width="15.5" height="12" fill="#a8e4f8" stroke="#e8e090" stroke-width="1"/>
<rect x="0" y="12.5" width="16.5" height="1.2" fill="#b8a830"/>
<path d="M5 13.5 H11.5 L13 16 H3.5 Z" fill="#c8c060"/>
<path d="M4.5 4 Q8.3 1.5 12 4 Z" fill="#e02020"/><rect x="4.5" y="4" width="7.5" height="2" fill="#20c020"/>
<rect x="4.5" y="6" width="2" height="4.5" fill="#f0e020"/><rect x="10" y="6" width="2" height="4.5" fill="#f0e020"/>
<rect x="6.5" y="6" width="3.5" height="4.5" fill="#2040c0"/><path d="M4 10.5 H12.5 L11 11.8 H4 Z" fill="#1830a0"/></svg>
<div style="position:absolute;left:257px;top:191.5px;height:16px;line-height:16px;font-size:13px;font-weight:bold;color:#111;white-space:nowrap;transform:scaleX(1.0807);transform-origin:0 0;">First application</div>
<div style="position:absolute;left:374px;top:190px;width:30px;height:17px;border:1px solid #7c8aa2;border-radius:3px;background:linear-gradient(#d6e0ea,#c8d4e2);"></div>
<div style="position:absolute;left:384px;top:198px;width:14px;height:5px;border:1px solid #3a3a4a;border-radius:2px;background:#f4f4f4;"></div>
<div style="position:absolute;left:242px;top:220px;width:220px;height:146px;background:linear-gradient(135deg,#7a8080 0%,#7b7b7b 50%,#7f7777 100%);"></div>
<svg style="position:absolute;left:242px;top:220px;" width="220" height="145" viewBox="0 0 220 145">
<defs><linearGradient id="gband" gradientUnits="userSpaceOnUse" x1="30" y1="0" x2="75" y2="0"><stop offset="0" stop-color="#2ec8c8"/><stop offset="1" stop-color="#33c433"/></linearGradient></defs>
<path d="M19.91 53.33 L14.67 47.29 M23.16 51.36 L18.08 45.17 M26.44 49.45 L21.55 43.12 M29.77 47.62 L25.06 41.16 M33.14 45.87 L28.61 39.27 M36.55 44.19 L32.21 37.46 M39.99 42.59 L35.85 35.74 M43.47 41.06 L39.52 34.10 M46.98 39.61 L43.24 32.54 M50.52 38.24 L46.98 31.07 M54.09 36.96 L50.76 29.68 M57.69 35.75 L54.57 28.38 M61.32 34.62 L58.41 27.17 M64.97 33.57 L62.28 26.04 M68.64 32.61 L66.17 25.00 M72.34 31.72 L70.08 24.05 M76.05 30.92 L74.01 23.19 M79.78 30.21 L77.96 22.42 M83.52 29.57 L81.93 21.73 M87.28 29.02 L85.91 21.14 M91.05 28.56 L89.91 20.64 M94.83 28.18 L93.91 20.23 M98.62 27.88 L97.93 19.91 M102.41 27.67 L101.95 19.68 M106.20 27.54 L105.97 19.55 M110.00 27.50 L110.00 11.50 M113.80 27.54 L114.03 19.55 M117.59 27.67 L118.05 19.68 M121.38 27.88 L122.07 19.91 M125.17 28.18 L126.09 20.23 M128.95 28.56 L130.09 20.64 M132.72 29.02 L134.09 21.14 M136.48 29.57 L138.07 21.73 M140.22 30.21 L142.04 22.42 M143.95 30.92 L145.99 23.19 M147.66 31.72 L149.92 24.05 M151.36 32.61 L153.83 25.00 M155.03 33.57 L157.72 26.04 M158.68 34.62 L161.59 27.17 M162.31 35.75 L165.43 28.38 M165.91 36.96 L169.24 29.68 M169.48 38.24 L173.02 31.07 M173.02 39.61 L176.76 32.54 M176.53 41.06 L180.48 34.10 M180.01 42.59 L184.15 35.74 M183.45 44.19 L187.79 37.46 M186.86 45.87 L191.39 39.27 M190.23 47.62 L194.94 41.16 M193.56 49.45 L198.45 43.12 M196.84 51.36 L201.92 45.17 M200.09 53.33 L205.33 47.29" stroke="#f4f4f4" stroke-width="1.1"/>
<path d="M19.91 53.33 A170 170 0 0 1 200.09 53.33" stroke="#f4f4f4" stroke-width="1.3" fill="none"/>
<path d="M3.5 42 L19.91 53.33" stroke="#f4f4f4" stroke-width="1.3"/>
<path d="M33.18 56.16 A167.5 167.5 0 0 1 186.82 56.16 L180.63 68.15 A154 154 0 0 0 39.37 68.15 Z" fill="url(#gband)" stroke="url(#gband)" stroke-width="4" stroke-linejoin="round"/>
<path d="M52.5 20 L59 32" stroke="#00f0f8" stroke-width="5" stroke-linecap="round"/>
<path d="M33.5 62.5 L34.2 61.6 L111.2 115.4 L108.8 118.6 Z" fill="#f8f8f8"/>
<circle cx="110" cy="117" r="4.5" fill="#ffffff"/>
<rect x="70.5" y="125" width="150" height="15.5" fill="#00ffff"/>
</svg>
<div style="position:absolute;left:244.5px;top:222.5px;height:12px;line-height:12px;font-size:10px;font-weight:bold;color:#f4f4f4;white-space:nowrap;transform:scaleX(1.1047);transform-origin:0 0;">0.00</div>
<div style="position:absolute;left:360px;top:345.5px;height:15px;line-height:15px;font-size:12px;font-weight:bold;color:#ffffff;white-space:nowrap;transform:scaleX(1.1775);transform-origin:0 0;">0.00</div>
<div style="position:absolute;left:242px;top:381px;width:220px;height:19px;background:linear-gradient(#dedede,#cfcfcf);border:1px solid #c4c4c4;"></div>
<div style="position:absolute;left:242px;top:381px;width:19px;height:19px;background:linear-gradient(#fafafa,#dcdcdc);border:1px solid #b8b8b8;"></div>
<svg style="position:absolute;left:242px;top:381px;" width="19" height="19" viewBox="0 0 19 19"><path d="M11.5 5.5 V13.5 L7 9.5 Z" fill="#909090"/></svg>
<div style="position:absolute;left:262px;top:381px;width:18px;height:19px;background:linear-gradient(#fafafa,#dcdcdc);border:1px solid #b8b8b8;"></div>
<div style="position:absolute;left:223px;top:180px;width:257px;height:239px;border:1px solid #ff0000;"></div>
<div style="position:absolute;left:220px;top:177px;width:7px;height:7px;background:#ff0000;"></div>
<div style="position:absolute;left:220px;top:296px;width:7px;height:7px;background:#ff0000;"></div>
<div style="position:absolute;left:220px;top:415px;width:7px;height:7px;background:#ff0000;"></div>
<div style="position:absolute;left:348px;top:177px;width:7px;height:7px;background:#ff0000;"></div>
<div style="position:absolute;left:348px;top:296px;width:7px;height:7px;background:#ff0000;"></div>
<div style="position:absolute;left:348px;top:415px;width:7px;height:7px;background:#ff0000;"></div>
<div style="position:absolute;left:393px;top:71px;width:173px;height:388px;background:rgba(0,0,0,.22);filter:blur(1.5px);"></div>
<div style="position:absolute;left:391px;top:69px;width:173px;height:388px;background:#e9e9e9;border:1px solid #979797;"></div>
<svg style="position:absolute;left:0px;top:0px;visibility:hidden;" width="1" height="1" viewBox="0 0 1 1"><defs><linearGradient id="gchk" x1="0" y1="0" x2="0" y2="1"><stop offset="0" stop-color="#f2fbfd"/><stop offset="1" stop-color="#c4e4ec"/></linearGradient></defs></svg>
<svg style="position:absolute;left:396px;top:74px;" width="18" height="18" viewBox="0 0 18 18"><rect x="0.5" y="0.5" width="17" height="17" fill="url(#gchk)" stroke="#8e8e8e" stroke-width="1"/>
<path d="M4.2 9.3 L7.6 13.2 L13.6 4.2" stroke="#2e2e2e" stroke-width="1.9" fill="none" stroke-linejoin="round"/></svg>
<div style="position:absolute;left:417px;top:76.0px;height:14px;line-height:14px;font-size:11.5px;font-weight:normal;color:#000;white-space:nowrap;transform:scaleX(0.9087);transform-origin:0 0;">Aplikace</div>
<svg style="position:absolute;left:396px;top:98px;" width="18" height="18" viewBox="0 0 18 18"><rect x="0.5" y="0.5" width="17" height="17" fill="url(#gchk)" stroke="#8e8e8e" stroke-width="1"/>
<path d="M4.2 9.3 L7.6 13.2 L13.6 4.2" stroke="#2e2e2e" stroke-width="1.9" fill="none" stroke-linejoin="round"/></svg>
<div style="position:absolute;left:417px;top:100.0px;height:14px;line-height:14px;font-size:11.5px;font-weight:normal;color:#000;white-space:nowrap;transform:scaleX(0.9402);transform-origin:0 0;">Generování</div>
<svg style="position:absolute;left:396px;top:122px;" width="18" height="18" viewBox="0 0 18 18"><rect x="0.5" y="0.5" width="17" height="17" fill="url(#gchk)" stroke="#8e8e8e" stroke-width="1"/>
<path d="M4.2 9.3 L7.6 13.2 L13.6 4.2" stroke="#2e2e2e" stroke-width="1.9" fill="none" stroke-linejoin="round"/></svg>
<div style="position:absolute;left:417px;top:124.0px;height:14px;line-height:14px;font-size:11.5px;font-weight:normal;color:#000;white-space:nowrap;transform:scaleX(0.9510);transform-origin:0 0;">Grafický editor</div>
<svg style="position:absolute;left:396px;top:146px;" width="18" height="18" viewBox="0 0 18 18"><rect x="0.5" y="0.5" width="17" height="17" fill="url(#gchk)" stroke="#8e8e8e" stroke-width="1"/>
<path d="M4.2 9.3 L7.6 13.2 L13.6 4.2" stroke="#2e2e2e" stroke-width="1.9" fill="none" stroke-linejoin="round"/></svg>
<div style="position:absolute;left:417px;top:148.0px;height:14px;line-height:14px;font-size:11.5px;font-weight:normal;color:#000;white-space:nowrap;transform:scaleX(0.9516);transform-origin:0 0;">Editace</div>
<div style="position:absolute;left:394px;top:168px;width:167px;height:22px;background:#3399ff;border:1px solid #2b7ed4;"></div>
<div style="position:absolute;left:417px;top:172.0px;height:14px;line-height:14px;font-size:11.5px;font-weight:normal;color:#ffffff;white-space:nowrap;transform:scaleX(0.9753);transform-origin:0 0;">Nastavení</div>
<svg style="position:absolute;left:396px;top:194px;" width="18" height="18" viewBox="0 0 18 18"><rect x="0.5" y="0.5" width="17" height="17" fill="url(#gchk)" stroke="#8e8e8e" stroke-width="1"/>
<path d="M4.2 9.3 L7.6 13.2 L13.6 4.2" stroke="#2e2e2e" stroke-width="1.9" fill="none" stroke-linejoin="round"/></svg>
<div style="position:absolute;left:417px;top:196.0px;height:14px;line-height:14px;font-size:11.5px;font-weight:normal;color:#000;white-space:nowrap;transform:scaleX(0.9632);transform-origin:0 0;">Nápověda</div>
<svg style="position:absolute;left:396px;top:218px;" width="18" height="18" viewBox="0 0 18 18"><rect x="0.5" y="0.5" width="17" height="17" fill="url(#gchk)" stroke="#8e8e8e" stroke-width="1"/>
<path d="M4.2 9.3 L7.6 13.2 L13.6 4.2" stroke="#2e2e2e" stroke-width="1.9" fill="none" stroke-linejoin="round"/></svg>
<div style="position:absolute;left:417px;top:220.0px;height:14px;line-height:14px;font-size:11.5px;font-weight:normal;color:#000;white-space:nowrap;transform:scaleX(0.9584);transform-origin:0 0;">Předlohy</div>
<svg style="position:absolute;left:396px;top:242px;" width="18" height="18" viewBox="0 0 18 18"><rect x="0.5" y="0.5" width="17" height="17" fill="url(#gchk)" stroke="#8e8e8e" stroke-width="1"/>
<path d="M4.2 9.3 L7.6 13.2 L13.6 4.2" stroke="#2e2e2e" stroke-width="1.9" fill="none" stroke-linejoin="round"/></svg>
<div style="position:absolute;left:417px;top:244.0px;height:14px;line-height:14px;font-size:11.5px;font-weight:normal;color:#000;white-space:nowrap;transform:scaleX(0.9243);transform-origin:0 0;">Vzhled</div>
<svg style="position:absolute;left:396px;top:266px;" width="18" height="18" viewBox="0 0 18 18"><rect x="0.5" y="0.5" width="17" height="17" fill="url(#gchk)" stroke="#8e8e8e" stroke-width="1"/>
<path d="M4.2 9.3 L7.6 13.2 L13.6 4.2" stroke="#2e2e2e" stroke-width="1.9" fill="none" stroke-linejoin="round"/></svg>
<div style="position:absolute;left:417px;top:268.0px;height:14px;line-height:14px;font-size:11.5px;font-weight:normal;color:#000;white-space:nowrap;transform:scaleX(0.9571);transform-origin:0 0;">Časování</div>
<svg style="position:absolute;left:396px;top:290px;" width="18" height="18" viewBox="0 0 18 18"><rect x="0.5" y="0.5" width="17" height="17" fill="url(#gchk)" stroke="#8e8e8e" stroke-width="1"/>
<path d="M4.2 9.3 L7.6 13.2 L13.6 4.2" stroke="#2e2e2e" stroke-width="1.9" fill="none" stroke-linejoin="round"/></svg>
<div style="position:absolute;left:417px;top:292.0px;height:14px;line-height:14px;font-size:11.5px;font-weight:normal;color:#000;white-space:nowrap;transform:scaleX(0.9800);transform-origin:0 0;">Vybraný přístroj</div>
<svg style="position:absolute;left:396px;top:314px;" width="18" height="18" viewBox="0 0 18 18"><rect x="0.5" y="0.5" width="17" height="17" fill="url(#gchk)" stroke="#8e8e8e" stroke-width="1"/>
<path d="M4.2 9.3 L7.6 13.2 L13.6 4.2" stroke="#2e2e2e" stroke-width="1.9" fill="none" stroke-linejoin="round"/></svg>
<div style="position:absolute;left:417px;top:316.0px;height:14px;line-height:14px;font-size:11.5px;font-weight:normal;color:#000;white-space:nowrap;transform:scaleX(1.0042);transform-origin:0 0;">Inspektor</div>
<svg style="position:absolute;left:396px;top:338px;" width="18" height="18" viewBox="0 0 18 18"><rect x="0.5" y="0.5" width="17" height="17" fill="url(#gchk)" stroke="#8e8e8e" stroke-width="1"/>
<path d="M4.2 9.3 L7.6 13.2 L13.6 4.2" stroke="#2e2e2e" stroke-width="1.9" fill="none" stroke-linejoin="round"/></svg>
<div style="position:absolute;left:417px;top:340.0px;height:14px;line-height:14px;font-size:11.5px;font-weight:normal;color:#000;white-space:nowrap;transform:scaleX(0.9632);transform-origin:0 0;">Paleta přístrojů</div>
<svg style="position:absolute;left:396px;top:362px;" width="18" height="18" viewBox="0 0 18 18"><rect x="0.5" y="0.5" width="17" height="17" fill="url(#gchk)" stroke="#8e8e8e" stroke-width="1"/>
<path d="M4.2 9.3 L7.6 13.2 L13.6 4.2" stroke="#2e2e2e" stroke-width="1.9" fill="none" stroke-linejoin="round"/></svg>
<div style="position:absolute;left:417px;top:364.0px;height:14px;line-height:14px;font-size:11.5px;font-weight:normal;color:#000;white-space:nowrap;transform:scaleX(0.9621);transform-origin:0 0;">Zarovnávání</div>
<svg style="position:absolute;left:396px;top:386px;" width="18" height="18" viewBox="0 0 18 18"><rect x="0.5" y="0.5" width="17" height="17" fill="url(#gchk)" stroke="#8e8e8e" stroke-width="1"/>
<path d="M4.2 9.3 L7.6 13.2 L13.6 4.2" stroke="#2e2e2e" stroke-width="1.9" fill="none" stroke-linejoin="round"/></svg>
<div style="position:absolute;left:417px;top:388.0px;height:14px;line-height:14px;font-size:11.5px;font-weight:normal;color:#000;white-space:nowrap;transform:scaleX(0.9598);transform-origin:0 0;">Nativní procedury</div>
<svg style="position:absolute;left:396px;top:410px;" width="18" height="18" viewBox="0 0 18 18"><rect x="0.5" y="0.5" width="17" height="17" fill="url(#gchk)" stroke="#8e8e8e" stroke-width="1"/>
<path d="M4.2 9.3 L7.6 13.2 L13.6 4.2" stroke="#2e2e2e" stroke-width="1.9" fill="none" stroke-linejoin="round"/></svg>
<div style="position:absolute;left:417px;top:412.0px;height:14px;line-height:14px;font-size:11.5px;font-weight:normal;color:#000;white-space:nowrap;transform:scaleX(0.9474);transform-origin:0 0;">Událostní procedury</div>
<div style="position:absolute;left:417px;top:436.0px;height:14px;line-height:14px;font-size:11.5px;font-weight:normal;color:#8d8d8d;white-space:nowrap;transform:scaleX(0.9525);transform-origin:0 0;">Uživatelská paleta přístrojů</div>
<svg style="position:absolute;left:662px;top:215px;" width="26" height="26" viewBox="0 0 26 26">
<defs><linearGradient id="gck" x1="0" y1="0" x2="1" y2="1"><stop offset="0" stop-color="#30c030"/><stop offset="1" stop-color="#008a00"/></linearGradient></defs>
<path d="M4 15.5 L10.5 22.5 L22.5 4" stroke="url(#gck)" stroke-width="4.2" fill="none" stroke-linecap="round" stroke-linejoin="round"/></svg>
<svg style="position:absolute;left:706px;top:207px;" width="17" height="17" viewBox="0 0 17 17"><path d="M3 10 L6.5 14 L14 2" stroke="#18a818" stroke-width="2.6" fill="none" stroke-linecap="round" stroke-linejoin="round"/></svg>
<svg style="position:absolute;left:706px;top:233px;" width="18" height="17" viewBox="0 0 18 17"><path d="M3 2 L15 14.5 M15 2 L3 14.5" stroke="#333" stroke-width="2.3" stroke-linecap="round"/></svg>
<svg style="position:absolute;left:705px;top:256px;" width="21" height="22" viewBox="0 0 21 22">
<rect x="0.5" y="0.5" width="16" height="17.5" fill="#f4f4f4" stroke="#b0a8a0" stroke-width="1"/>
<rect x="2" y="2.5" width="13" height="5" fill="#fff" stroke="#c0c0c0" stroke-width=".6"/>
<text x="9" y="7" font-family="Liberation Sans" font-size="5" font-weight="bold" fill="#3a7ad8">AB</text>
<rect x="2" y="10" width="7" height="5" fill="#fff" stroke="#c0c0c0" stroke-width=".6"/>
<path d="M12 9 V15 L10.5 14 Q9 14 10 16 L12 19.5 H19 L19.5 14 Q19.5 12.5 18 12.5 V11.5 Q16.5 11 15.5 12 V9 Q14 7.5 12 9 Z" fill="#fcd8b8" stroke="#c8906a" stroke-width=".7"/></svg>
<svg style="position:absolute;left:746px;top:205px;" width="20" height="22" viewBox="0 0 20 22"><defs><linearGradient id="gtb" x1="0" y1="0" x2="0" y2="1"><stop offset="0" stop-color="#a8e0ff"/><stop offset="1" stop-color="#2a98f0"/></linearGradient>
<linearGradient id="gtt" x1="0" y1="0" x2="0" y2="1"><stop offset="0" stop-color="#a8f0e0"/><stop offset="1" stop-color="#2ac0a0"/></linearGradient></defs><rect x="8" y="0" width="10" height="5.5" rx="1" fill="url(#gtb)" stroke="#3a88d0" stroke-width=".5"/><rect x="8" y="7" width="10" height="5.5" rx="1" fill="url(#gtb)" stroke="#3a88d0" stroke-width=".5"/><rect x="1" y="14" width="10" height="5.5" rx="1" fill="url(#gtt)" stroke="#30a890" stroke-width=".5"/><path d="M11 16.75 H16" stroke="#333" stroke-width="1"/><path d="M15 15 L18 16.75 L15 18.5 Z" fill="#333"/></svg>
<svg style="position:absolute;left:746px;top:231px;" width="20" height="22" viewBox="0 0 20 22"><defs><linearGradient id="gtb" x1="0" y1="0" x2="0" y2="1"><stop offset="0" stop-color="#a8e0ff"/><stop offset="1" stop-color="#2a98f0"/></linearGradient>
<linearGradient id="gtt" x1="0" y1="0" x2="0" y2="1"><stop offset="0" stop-color="#a8f0e0"/><stop offset="1" stop-color="#2ac0a0"/></linearGradient></defs><rect x="8" y="0" width="10" height="5.5" rx="1" fill="url(#gtb)" stroke="#3a88d0" stroke-width=".5"/><rect x="1" y="7" width="10" height="5.5" rx="1" fill="url(#gtt)" stroke="#30a890" stroke-width=".5"/><path d="M11 9.75 H16" stroke="#333" stroke-width="1"/><path d="M15 8 L18 9.75 L15 11.5 Z" fill="#333"/><rect x="8" y="14" width="10" height="5.5" rx="1" fill="url(#gtb)" stroke="#3a88d0" stroke-width=".5"/></svg>
<svg style="position:absolute;left:746px;top:257px;" width="20" height="22" viewBox="0 0 20 22"><defs><linearGradient id="gtb" x1="0" y1="0" x2="0" y2="1"><stop offset="0" stop-color="#a8e0ff"/><stop offset="1" stop-color="#2a98f0"/></linearGradient>
<linearGradient id="gtt" x1="0" y1="0" x2="0" y2="1"><stop offset="0" stop-color="#a8f0e0"/><stop offset="1" stop-color="#2ac0a0"/></linearGradient></defs><rect x="0.5" y="0" width="10" height="5.5" rx="1" fill="url(#gtb)" stroke="#3a88d0" stroke-width=".5"/><rect x="3" y="7" width="10" height="5.5" rx="1" fill="url(#gtt)" stroke="#30a890" stroke-width=".5"/><path d="M13 9.75 H18" stroke="#333" stroke-width="1"/><path d="M17 8 L20 9.75 L17 11.5 Z" fill="#333"/><rect x="0.5" y="14" width="10" height="5.5" rx="1" fill="url(#gtb)" stroke="#3a88d0" stroke-width=".5"/></svg>
<svg style="position:absolute;left:787px;top:213px;" width="21" height="22" viewBox="0 0 21 22">
<path d="M1.5 15 L5 11 H19 L19.5 15 L17 19 H2 Z" fill="#e0e0e0" stroke="#8a8a8a" stroke-width=".8"/>
<path d="M2 15 H17.5 L17 19 H2 Z" fill="#c8c8c8"/>
<rect x="8.5" y="5" width="4" height="9" fill="#d02020"/>
<ellipse cx="10.5" cy="4" rx="2.6" ry="3.2" fill="#e83030"/></svg>
<svg style="position:absolute;left:787px;top:250px;" width="21" height="19" viewBox="0 0 21 19">
<rect x="0.5" y="0.5" width="19" height="17" fill="#fff" stroke="#fff"/>
<rect x="0.5" y="1" width="12.5" height="16" fill="#fff" stroke="#111" stroke-width="1"/>
<path d="M0.5 9 H13" stroke="#111" stroke-width="1"/>
<rect x="13" y="1" width="6.5" height="16" fill="#fff" stroke="#ff2020" stroke-width="1"/>
<path d="M14 11 H18.5 M14.5 11 L16 9.7 M14.5 11 L16 12.3" stroke="#ff2020" stroke-width=".9"/>
<text x="2" y="8" font-family="Liberation Sans" font-size="7.5" fill="#111">A</text>
<text x="1.6" y="16" font-family="Liberation Sans" font-size="7.5" fill="#111">AA</text></svg>
<svg style="position:absolute;left:827px;top:205px;" width="22" height="20" viewBox="0 0 22 20"><rect x="0.5" y="0.5" width="20" height="8" fill="#fff" stroke="#111" stroke-width="1"/><path d="M0.5 4.5 H20.5" stroke="#111" stroke-width="1"/><path d="M7.2 0.5 V8.5" stroke="#111" stroke-width="1"/><path d="M13.8 0.5 V8.5" stroke="#111" stroke-width="1"/><path d="M3 8.5 V10.5 H6" stroke="#111" stroke-width=".8" fill="none"/><rect x="6" y="10.5" width="14" height="8" fill="#fff" stroke="#111" stroke-width="1"/><path d="M6 14.5 H20 M10.5 10.5 V18.5 M15 10.5 V18.5" stroke="#111" stroke-width="1"/></svg>
<svg style="position:absolute;left:827px;top:232px;" width="22" height="20" viewBox="0 0 22 20"><rect x="0.5" y="0.5" width="14" height="8" fill="#fff" stroke="#111" stroke-width="1"/><path d="M0.5 4.5 H14.5" stroke="#111" stroke-width="1"/><path d="M7.5 0.5 V8.5" stroke="#111" stroke-width="1"/><path d="M3 8.5 V10.5 H6" stroke="#111" stroke-width=".8" fill="none"/><rect x="6" y="10.5" width="14" height="8" fill="#fff" stroke="#111" stroke-width="1"/><path d="M6 14.5 H20 M10.5 10.5 V18.5 M15 10.5 V18.5" stroke="#111" stroke-width="1"/><rect x="13.5" y="10.5" width="6.5" height="8" fill="#ff2020"/><rect x="15" y="12" width="3.5" height="5" fill="#fff"/><path d="M15.5 14.5 H18 M16.5 13.5 L15.5 14.5 L16.5 15.5" stroke="#ff2020" stroke-width=".8" fill="none"/></svg>
<svg style="position:absolute;left:827px;top:257px;" width="22" height="20" viewBox="0 0 22 20"><rect x="0.5" y="0.5" width="20" height="8" fill="#fff" stroke="#111" stroke-width="1"/><path d="M0.5 4.5 H20.5" stroke="#111" stroke-width="1"/><path d="M7.2 0.5 V8.5" stroke="#111" stroke-width="1"/><path d="M13.8 0.5 V8.5" stroke="#111" stroke-width="1"/><path d="M3 8.5 V10.5 H6" stroke="#111" stroke-width=".8" fill="none"/><rect x="6" y="10.5" width="14" height="8" fill="#fff" stroke="#111" stroke-width="1"/><path d="M6 14.5 H20 M10.5 10.5 V18.5 M15 10.5 V18.5" stroke="#111" stroke-width="1"/><path d="M14.5 11 V17 M14.5 15 H18.5 M17.5 14 L18.5 15 L17.5 16" stroke="#ff2020" stroke-width="1" fill="none"/></svg>
<svg style="position:absolute;left:868px;top:214px;" width="22" height="21" viewBox="0 0 22 21">
<path d="M1 5 L10.5 7 L20 5 V18.5 L10.5 19.5 L1 18.5 Z" fill="#a020b0"/>
<path d="M2.2 5 Q6 3 10.5 6 Q15 3 18.8 5 V17.3 Q15 15.8 10.5 17.8 Q6 15.8 2.2 17.3 Z" fill="#f4f4f4" stroke="#c8c8c8" stroke-width=".5"/>
<path d="M7.5 5 Q7.5 1.5 11 1.5 Q14.5 1.5 14.5 4.8 Q14.5 6.7 12 7.8 Q11 8.3 11 10.8" stroke="#8a6a00" stroke-width="3.2" fill="none"/>
<path d="M7.5 5 Q7.5 1.5 11 1.5 Q14.5 1.5 14.5 4.8 Q14.5 6.7 12 7.8 Q11 8.3 11 10.8" stroke="#ffd800" stroke-width="2" fill="none"/>
<rect x="9.5" y="12.3" width="3" height="3" fill="#ffd800" stroke="#8a6a00" stroke-width=".6"/></svg>
<svg style="position:absolute;left:870px;top:248px;" width="19" height="22" viewBox="0 0 19 22">
<defs><linearGradient id="gocl" x1="0" y1="0" x2="1" y2="1"><stop offset="0" stop-color="#ffffff"/><stop offset="1" stop-color="#f0d890"/></linearGradient></defs>
<path d="M5 1 H15.5 V15 H2 V4 Z" fill="url(#gocl)" stroke="#a8a8a8" stroke-width=".8"/>
<path d="M6.5 6 Q6.5 3 9 3 Q11.5 3 11.5 5.5 Q11.5 7 10 7.7 Q9 8.2 9 10" stroke="#7a6000" stroke-width="2.6" fill="none"/>
<path d="M6.5 6 Q6.5 3 9 3 Q11.5 3 11.5 5.5 Q11.5 7 10 7.7 Q9 8.2 9 10" stroke="#ffe000" stroke-width="1.5" fill="none"/>
<rect x="8" y="11" width="2.2" height="2.2" fill="#ffe000" stroke="#7a6000" stroke-width=".5"/>
<text x="9.5" y="21" text-anchor="middle" font-family="Liberation Sans" font-weight="bold" font-size="6.5" fill="#6a3a00" textLength="16" lengthAdjust="spacingAndGlyphs">OCL</text></svg>
<div style="position:absolute;left:652px;top:283px;width:295px;height:18px;background:linear-gradient(#ececec,#d6d6d6);border-bottom:1px solid #a8a8a8;border-top:1px solid #b8b8b8;"></div>
<div style="position:absolute;left:785px;top:283px;width:1px;height:18px;background:#a8a8a8;"></div>
<div style="position:absolute;left:905px;top:283px;width:1px;height:18px;background:#a8a8a8;"></div>
<div style="position:absolute;left:654.5px;top:285.0px;height:14px;line-height:14px;font-size:11.5px;font-weight:normal;color:#000;white-space:nowrap;transform:scaleX(0.9410);transform-origin:0 0;">Parametr</div>
<div style="position:absolute;left:788.5px;top:285.0px;height:14px;line-height:14px;font-size:11.5px;font-weight:normal;color:#000;white-space:nowrap;transform:scaleX(0.9660);transform-origin:0 0;">Hodnota</div>
<div style="position:absolute;left:908.5px;top:285.0px;height:14px;line-height:14px;font-size:11.5px;font-weight:normal;color:#000;white-space:nowrap;transform:scaleX(0.9038);transform-origin:0 0;">Popis</div>
<div style="position:absolute;left:652px;top:301px;width:295px;height:16px;background:#fff;border-bottom:1px solid #a8a8a8;"></div>
<div style="position:absolute;left:785px;top:301px;width:1px;height:16px;background:#a8a8a8;"></div>
<div style="position:absolute;left:905px;top:301px;width:1px;height:16px;background:#a8a8a8;"></div>
<div style="position:absolute;left:666px;top:302.0px;height:14px;line-height:14px;font-size:11.5px;font-weight:normal;color:#000;white-space:nowrap;transform:scaleX(0.9560);transform-origin:0 0;">panel</div>
<div style="position:absolute;left:787px;top:302.0px;height:14px;line-height:14px;font-size:11.5px;font-weight:normal;color:#000;white-space:nowrap;transform:scaleX(0.9651);transform-origin:0 0;">panel_1</div>
<div style="position:absolute;left:652px;top:317px;width:295px;height:16px;background:#fff;border-bottom:1px solid #a8a8a8;"></div>
<div style="position:absolute;left:785px;top:317px;width:1px;height:16px;background:#a8a8a8;"></div>
<div style="position:absolute;left:905px;top:317px;width:1px;height:16px;background:#a8a8a8;"></div>
<div style="position:absolute;left:666px;top:318.0px;height:14px;line-height:14px;font-size:11.5px;font-weight:normal;color:#000;white-space:nowrap;transform:scaleX(0.9704);transform-origin:0 0;">template</div>
<div style="position:absolute;left:652px;top:333px;width:295px;height:16px;background:#fff;border-bottom:1px solid #a8a8a8;"></div>
<div style="position:absolute;left:785px;top:333px;width:1px;height:16px;background:#a8a8a8;"></div>
<div style="position:absolute;left:905px;top:333px;width:1px;height:16px;background:#a8a8a8;"></div>
<div style="position:absolute;left:666px;top:334.0px;height:14px;line-height:14px;font-size:11.5px;font-weight:normal;color:#000;white-space:nowrap;transform:scaleX(0.9594);transform-origin:0 0;">rem</div>
<div style="position:absolute;left:652px;top:349px;width:295px;height:16px;background:#fff;border-bottom:1px solid #a8a8a8;"></div>
<div style="position:absolute;left:785px;top:349px;width:1px;height:16px;background:#a8a8a8;"></div>
<div style="position:absolute;left:905px;top:349px;width:1px;height:16px;background:#a8a8a8;"></div>
<svg style="position:absolute;left:655px;top:351px;" width="11" height="11" viewBox="0 0 11 11"><rect x="1.6" y="1.6" width="8" height="8" fill="#fff" stroke="#111" stroke-width="1.3"/><path d="M2.5 5.6 H7.5" stroke="#111" stroke-width="1.2"/><path d="M5.6 3 V8.2" stroke="#111" stroke-width="1.2"/></svg>
<div style="position:absolute;left:665.75px;top:350.0px;height:14px;line-height:14px;font-size:11.5px;font-weight:normal;color:#000;white-space:nowrap;transform:scaleX(1.0243);transform-origin:0 0;">activity</div>
<div style="position:absolute;left:652px;top:365px;width:295px;height:16px;background:#fff;border-bottom:1px solid #a8a8a8;"></div>
<div style="position:absolute;left:785px;top:365px;width:1px;height:16px;background:#a8a8a8;"></div>
<div style="position:absolute;left:905px;top:365px;width:1px;height:16px;background:#a8a8a8;"></div>
<svg style="position:absolute;left:655px;top:367px;" width="11" height="11" viewBox="0 0 11 11"><rect x="1.6" y="1.6" width="8" height="8" fill="#fff" stroke="#111" stroke-width="1.3"/><path d="M2.5 5.6 H7.5" stroke="#111" stroke-width="1.2"/></svg>
<div style="position:absolute;left:665.75px;top:366.0px;height:14px;line-height:14px;font-size:11.5px;font-weight:normal;color:#000;white-space:nowrap;transform:scaleX(0.9774);transform-origin:0 0;">gui</div>
<div style="position:absolute;left:906px;top:283px;width:41px;height:255px;overflow:hidden;">
<div style="position:absolute;left:2.2999999999999545px;top:19.0px;height:14px;line-height:14px;font-size:11.5px;font-weight:normal;color:#000;white-space:nowrap;transform:scaleX(0.9183);transform-origin:0 0;">Jméno panelu</div>
<div style="position:absolute;left:2.2999999999999545px;top:35.0px;height:14px;line-height:14px;font-size:11.5px;font-weight:normal;color:#000;white-space:nowrap;transform:scaleX(0.9183);transform-origin:0 0;">Vzor přístroje</div>
<div style="position:absolute;left:2.2999999999999545px;top:51.0px;height:14px;line-height:14px;font-size:11.5px;font-weight:normal;color:#000;white-space:nowrap;transform:scaleX(0.9183);transform-origin:0 0;">Poznámka</div>
<div style="position:absolute;left:2.2999999999999545px;top:67.0px;height:14px;line-height:14px;font-size:11.5px;font-weight:normal;color:#000;white-space:nowrap;transform:scaleX(0.9183);transform-origin:0 0;">Aktivita</div>
<div style="position:absolute;left:2.2999999999999545px;top:83.0px;height:14px;line-height:14px;font-size:11.5px;font-weight:normal;color:#000;white-space:nowrap;transform:scaleX(0.9183);transform-origin:0 0;">Vzhled přístroje</div>
</div>
<div style="position:absolute;left:652px;top:380px;width:295px;height:3px;background:#d0d0d0;border-top:1px solid #a8a8a8;"></div>
<div style="position:absolute;left:652px;top:381px;width:13px;height:157px;background:#a9a9a9;border-left:1px solid #e0e0e0;"></div>
<svg style="position:absolute;left:656px;top:381px;" width="9" height="10" viewBox="0 0 9 10"><path d="M4.5 0 V8.5 H9" stroke="#f4f4f4" stroke-width="1" fill="none"/></svg>
<div style="position:absolute;left:665px;top:383px;width:282px;height:17px;background:linear-gradient(#ececec,#d6d6d6);border-bottom:1px solid #a8a8a8;"></div>
<div style="position:absolute;left:785px;top:383px;width:1px;height:17px;background:#a8a8a8;"></div>
<div style="position:absolute;left:905px;top:383px;width:1px;height:17px;background:#a8a8a8;"></div>
<div style="position:absolute;left:668px;top:385.0px;height:14px;line-height:14px;font-size:11.5px;font-weight:normal;color:#000;white-space:nowrap;transform:scaleX(0.9410);transform-origin:0 0;">Parametr</div>
<div style="position:absolute;left:788.5px;top:385.0px;height:14px;line-height:14px;font-size:11.5px;font-weight:normal;color:#000;white-space:nowrap;transform:scaleX(0.9660);transform-origin:0 0;">Hodnota</div>
<div style="position:absolute;left:908.5px;top:385.0px;height:14px;line-height:14px;font-size:11.5px;font-weight:normal;color:#000;white-space:nowrap;transform:scaleX(0.9038);transform-origin:0 0;">Popis</div>
<div style="position:absolute;left:665px;top:400px;width:282px;height:138px;overflow:hidden;">
<div style="position:absolute;left:0px;top:0px;width:282px;height:16px;background:#fff;border-bottom:1px solid #a8a8a8;"></div>
<div style="position:absolute;left:120px;top:0px;width:1px;height:16px;background:#a8a8a8;"></div>
<div style="position:absolute;left:240px;top:0px;width:1px;height:16px;background:#a8a8a8;"></div>
<div style="position:absolute;left:14.5px;top:1.0px;height:14px;line-height:14px;font-size:11.5px;font-weight:normal;color:#000;white-space:nowrap;transform:scaleX(1.0695);transform-origin:0 0;">owner</div>
<div style="position:absolute;left:123.5px;top:1.0px;height:14px;line-height:14px;font-size:11.5px;font-weight:normal;color:#1a1ae6;white-space:nowrap;transform:scaleX(0.9651);transform-origin:0 0;">background</div>
<div style="position:absolute;left:0px;top:16px;width:282px;height:16px;background:#fff;border-bottom:1px solid #a8a8a8;"></div>
<div style="position:absolute;left:120px;top:16px;width:1px;height:16px;background:#a8a8a8;"></div>
<div style="position:absolute;left:240px;top:16px;width:1px;height:16px;background:#a8a8a8;"></div>
<div style="position:absolute;left:14.5px;top:17.0px;height:14px;line-height:14px;font-size:11.5px;font-weight:normal;color:#000;white-space:nowrap;transform:scaleX(0.9562);transform-origin:0 0;">position</div>
<div style="position:absolute;left:123.5px;top:17.0px;height:14px;line-height:14px;font-size:11.5px;font-weight:normal;color:#1a1ae6;white-space:nowrap;transform:scaleX(0.9924);transform-origin:0 0;">21, 44, 242, 201</div>
<div style="position:absolute;left:0px;top:32px;width:282px;height:16px;background:#fff;border-bottom:1px solid #a8a8a8;"></div>
<div style="position:absolute;left:120px;top:32px;width:1px;height:16px;background:#a8a8a8;"></div>
<div style="position:absolute;left:240px;top:32px;width:1px;height:16px;background:#a8a8a8;"></div>
<div style="position:absolute;left:14.5px;top:33.0px;height:14px;line-height:14px;font-size:11.5px;font-weight:normal;color:#000;white-space:nowrap;transform:scaleX(1.0186);transform-origin:0 0;">gravity</div>
<div style="position:absolute;left:123.5px;top:33.0px;height:14px;line-height:14px;font-size:11.5px;font-weight:normal;color:#000;white-space:nowrap;transform:scaleX(0.9772);transform-origin:0 0;">none</div>
<div style="position:absolute;left:0px;top:48px;width:282px;height:16px;background:#fff;border-bottom:1px solid #a8a8a8;"></div>
<div style="position:absolute;left:120px;top:48px;width:1px;height:16px;background:#a8a8a8;"></div>
<div style="position:absolute;left:240px;top:48px;width:1px;height:16px;background:#a8a8a8;"></div>
<div style="position:absolute;left:14.5px;top:49.0px;height:14px;line-height:14px;font-size:11.5px;font-weight:normal;color:#000;white-space:nowrap;transform:scaleX(0.9573);transform-origin:0 0;">ascend</div>
<div style="position:absolute;left:0px;top:64px;width:282px;height:16px;background:#fff;border-bottom:1px solid #a8a8a8;"></div>
<div style="position:absolute;left:120px;top:64px;width:1px;height:16px;background:#a8a8a8;"></div>
<div style="position:absolute;left:240px;top:64px;width:1px;height:16px;background:#a8a8a8;"></div>
<div style="position:absolute;left:14.5px;top:65.0px;height:14px;line-height:14px;font-size:11.5px;font-weight:normal;color:#000;white-space:nowrap;transform:scaleX(0.9315);transform-origin:0 0;">descend</div>
<div style="position:absolute;left:0px;top:80px;width:282px;height:16px;background:#fff;border-bottom:1px solid #a8a8a8;"></div>
<div style="position:absolute;left:120px;top:80px;width:1px;height:16px;background:#a8a8a8;"></div>
<div style="position:absolute;left:240px;top:80px;width:1px;height:16px;background:#a8a8a8;"></div>
<div style="position:absolute;left:14.5px;top:81.0px;height:14px;line-height:14px;font-size:11.5px;font-weight:normal;color:#000;white-space:nowrap;transform:scaleX(0.9567);transform-origin:0 0;">visibility</div>
<div style="position:absolute;left:0px;top:96px;width:282px;height:16px;background:#fff;border-bottom:1px solid #a8a8a8;"></div>
<div style="position:absolute;left:120px;top:96px;width:1px;height:16px;background:#a8a8a8;"></div>
<div style="position:absolute;left:240px;top:96px;width:1px;height:16px;background:#a8a8a8;"></div>
<div style="position:absolute;left:14.5px;top:97.0px;height:14px;line-height:14px;font-size:11.5px;font-weight:normal;color:#000;white-space:nowrap;transform:scaleX(0.9820);transform-origin:0 0;">select</div>
<div style="position:absolute;left:0px;top:112px;width:282px;height:16px;background:#fff;border-bottom:1px solid #a8a8a8;"></div>
<div style="position:absolute;left:120px;top:112px;width:1px;height:16px;background:#a8a8a8;"></div>
<div style="position:absolute;left:240px;top:112px;width:1px;height:16px;background:#a8a8a8;"></div>
<div style="position:absolute;left:14.5px;top:113.0px;height:14px;line-height:14px;font-size:11.5px;font-weight:normal;color:#000;white-space:nowrap;transform:scaleX(0.9080);transform-origin:0 0;">access</div>
<div style="position:absolute;left:0px;top:128px;width:282px;height:16px;background:#fff;border-bottom:1px solid #a8a8a8;"></div>
<div style="position:absolute;left:120px;top:128px;width:1px;height:16px;background:#a8a8a8;"></div>
<div style="position:absolute;left:240px;top:128px;width:1px;height:16px;background:#a8a8a8;"></div>
<div style="position:absolute;left:14.5px;top:129.0px;height:14px;line-height:14px;font-size:11.5px;font-weight:normal;color:#000;white-space:nowrap;transform:scaleX(0.9990);transform-origin:0 0;">bubble</div>
</div>
<div style="position:absolute;left:906px;top:400px;width:41px;height:138px;overflow:hidden;">
<div style="position:absolute;left:2.2999999999999545px;top:1.0px;height:14px;line-height:14px;font-size:11.5px;font-weight:normal;color:#000;white-space:nowrap;transform:scaleX(0.9183);transform-origin:0 0;">Vlastník přístroje</div>
<div style="position:absolute;left:2.2999999999999545px;top:17.0px;height:14px;line-height:14px;font-size:11.5px;font-weight:normal;color:#000;white-space:nowrap;transform:scaleX(0.9183);transform-origin:0 0;">Pozice přístroje</div>
<div style="position:absolute;left:2.2999999999999545px;top:33.0px;height:14px;line-height:14px;font-size:11.5px;font-weight:normal;color:#000;white-space:nowrap;transform:scaleX(0.9183);transform-origin:0 0;">Přitažlivost</div>
<div style="position:absolute;left:2.2999999999999545px;top:49.0px;height:14px;line-height:14px;font-size:11.5px;font-weight:normal;color:#000;white-space:nowrap;transform:scaleX(0.9183);transform-origin:0 0;">Podmínka</div>
<div style="position:absolute;left:2.2999999999999545px;top:65.0px;height:14px;line-height:14px;font-size:11.5px;font-weight:normal;color:#000;white-space:nowrap;transform:scaleX(0.9183);transform-origin:0 0;">Podmínka</div>
<div style="position:absolute;left:2.2999999999999545px;top:81.0px;height:14px;line-height:14px;font-size:11.5px;font-weight:normal;color:#000;white-space:nowrap;transform:scaleX(0.9183);transform-origin:0 0;">Podmínka</div>
<div style="position:absolute;left:2.2999999999999545px;top:97.0px;height:14px;line-height:14px;font-size:11.5px;font-weight:normal;color:#000;white-space:nowrap;transform:scaleX(0.9183);transform-origin:0 0;">Podmínka</div>
<div style="position:absolute;left:2.2999999999999545px;top:113.0px;height:14px;line-height:14px;font-size:11.5px;font-weight:normal;color:#000;white-space:nowrap;transform:scaleX(0.9183);transform-origin:0 0;">Úrovně přístupu</div>
<div style="position:absolute;left:2.2999999999999545px;top:129.0px;height:14px;line-height:14px;font-size:11.5px;font-weight:normal;color:#000;white-space:nowrap;transform:scaleX(0.9183);transform-origin:0 0;">Text nápovědy</div>
</div>
<div style="position:absolute;left:947px;top:283px;width:16px;height:255px;background:linear-gradient(90deg,#d6d6d6,#cdcdcd);"></div>
<div style="position:absolute;left:947px;top:283px;width:16px;height:17px;background:linear-gradient(#fbfbfb,#e0e0e0);border:1px solid #c6c6c6;border-right-color:#aaa;border-bottom-color:#aaa;"></div>
<svg style="position:absolute;left:947px;top:283px;" width="16" height="17" viewBox="0 0 16 17"><path d="M4 10.5 H12 L8 6.5 Z" fill="#a0a0a0"/></svg>
<div style="position:absolute;left:947px;top:301px;width:16px;height:79px;background:linear-gradient(90deg,#fbfbfb,#e0e0e0);border:1px solid #c6c6c6;border-right-color:#aaa;border-bottom-color:#aaa;"></div>
<svg style="position:absolute;left:947px;top:335px;" width="16" height="10" viewBox="0 0 16 10"><path d="M4.5 1.5 H11.5 M4.5 3.5 H11.5 M4.5 5.5 H11.5 M4.5 7.5 H11.5" stroke="#8a8a8a" stroke-width="1"/></svg>
<div style="position:absolute;left:947px;top:522px;width:16px;height:16px;background:linear-gradient(#fbfbfb,#e0e0e0);border:1px solid #c6c6c6;border-right-color:#aaa;border-bottom-color:#aaa;"></div>
<svg style="position:absolute;left:947px;top:522px;" width="16" height="16" viewBox="0 0 16 16"><path d="M4 6 H12 L8 10.5 Z" fill="#000"/></svg>
<div style="position:absolute;left:652px;top:538px;width:295px;height:16px;background:linear-gradient(#d6d6d6,#cdcdcd);"></div>
<div style="position:absolute;left:652px;top:538px;width:16px;height:16px;background:linear-gradient(#fbfbfb,#e0e0e0);border:1px solid #c6c6c6;border-right-color:#aaa;border-bottom-color:#aaa;"></div>
<svg style="position:absolute;left:652px;top:538px;" width="16" height="16" viewBox="0 0 16 16"><path d="M10 4 V12 L6 8 Z" fill="#a0a0a0"/></svg>
<div style="position:absolute;left:669px;top:538px;width:91px;height:16px;background:linear-gradient(#fbfbfb,#e0e0e0);border:1px solid #c6c6c6;border-right-color:#aaa;border-bottom-color:#aaa;"></div>
<svg style="position:absolute;left:669px;top:538px;" width="91" height="16" viewBox="0 0 91 16"><path d="M41.5 3.5 V12.5 M43.5 3.5 V12.5 M45.5 3.5 V12.5 M47.5 3.5 V12.5" stroke="#8a8a8a" stroke-width="1"/></svg>
<div style="position:absolute;left:930px;top:538px;width:16px;height:16px;background:linear-gradient(#fbfbfb,#e0e0e0);border:1px solid #c6c6c6;border-right-color:#aaa;border-bottom-color:#aaa;"></div>
<svg style="position:absolute;left:929.5px;top:538px;" width="17" height="16" viewBox="0 0 17 16"><path d="M7 4 V12 L11 8 Z" fill="#000"/></svg>
<div style="position:absolute;left:947px;top:538px;width:16px;height:16px;background:#e8e8e8;"></div>
<div style="position:absolute;left:651px;top:557px;width:148px;height:17px;border:1px solid #c8c8c8;"></div>
<div style="position:absolute;left:652px;top:559.0px;height:14px;line-height:14px;font-size:11.5px;font-weight:normal;color:#000;white-space:nowrap;transform:scaleX(0.9773);transform-origin:0 0;">panel</div>
<div style="position:absolute;left:801px;top:557px;width:163px;height:17px;overflow:hidden;">
<div style="position:absolute;left:0;top:0;width:163px;height:17px;border:1px solid #c8c8c8;"></div>
<div style="position:absolute;left:1.5px;top:2.0px;height:14px;line-height:14px;font-size:11.5px;font-weight:normal;color:#000;white-space:nowrap;transform:scaleX(0.9172);transform-origin:0 0;">Panel sdružující na své ploše ostatní přístroje</div>
</div>
<div style="position:absolute;left:965px;top:169px;width:21px;height:70px;border:1px solid #a0a0a0;border-left:none;background:linear-gradient(270deg,#f4f4f4,#d0d0d0);"></div>
<div style="position:absolute;left:968.5px;top:172px;width:0;height:0;transform:rotate(90deg);transform-origin:0 0;"><div style="position:absolute;left:0px;top:-11.0px;height:14px;line-height:14px;font-size:11.5px;font-weight:normal;color:#000;white-space:nowrap;transform:scaleX(0.9699);transform-origin:0 0;">Zarovnávání</div></div>
<div style="position:absolute;left:965px;top:244px;width:21px;height:58px;border:1px solid #a0a0a0;border-left:none;background:linear-gradient(270deg,#f6fcfe,#cfe9f1);"></div>
<div style="position:absolute;left:968.5px;top:248.5px;width:0;height:0;transform:rotate(90deg);transform-origin:0 0;"><div style="position:absolute;left:0px;top:-11.0px;height:14px;line-height:14px;font-size:11.5px;font-weight:normal;color:#000;white-space:nowrap;transform:scaleX(0.9936);transform-origin:0 0;">Inspektor</div></div>
<svg style="position:absolute;left:8px;top:558px;" width="21" height="17" viewBox="0 0 21 17"><path d="M14.5 1.5 L7.5 8.5 L14.5 15.5" stroke="#9a9a9a" stroke-width="1.2" fill="none"/></svg>
<svg style="position:absolute;left:965px;top:556px;" width="21" height="17" viewBox="0 0 21 17"><path d="M7.5 1.5 L14.5 8.5 L7.5 15.5" stroke="#9a9a9a" stroke-width="1.2" fill="none"/></svg>
<svg style="position:absolute;left:967px;top:582px;" width="16" height="11" viewBox="0 0 16 11"><path d="M1 9.5 L8 2.5 L15 9.5" stroke="#8a8a8a" stroke-width="1.2" fill="none"/></svg>
<svg style="position:absolute;left:974px;top:609px;" width="12" height="12" viewBox="0 0 12 12"><path d="M11.5 1 L1 11.5 M11.5 4.5 L4.5 11.5 M11.5 8 L8 11.5" stroke="#a0a0a0" stroke-width="1.1"/></svg>
<svg style="position:absolute;left:58px;top:172px;" width="20" height="20" viewBox="0 0 20 20"><rect x="0.5" y="0.5" width="19" height="19" rx="1.5" fill="#e4e4e4" stroke="#a4a4a4" stroke-width="1"/>
<rect x="2" y="2" width="7" height="2.2" fill="#6a1010"/><rect x="11" y="2" width="7" height="2.2" fill="#6a1010"/>
<circle cx="3.5" cy="6.5" r="1.6" fill="#f0d810"/><circle cx="6.5" cy="6.5" r="1.6" fill="#e01818"/><circle cx="10" cy="6.5" r="1.4" fill="#c8c8c8"/><circle cx="13.5" cy="6.5" r="1.6" fill="#18b818"/><circle cx="17" cy="6.5" r="1.6" fill="#18b818"/>
<circle cx="3.5" cy="10" r="1.6" fill="#d01010"/><circle cx="6.5" cy="10" r="1.4" fill="#f4f4f4"/><circle cx="10" cy="10" r="1.4" fill="#f4f4f4"/><circle cx="13.5" cy="10" r="1.6" fill="#e8c010"/><circle cx="17" cy="10" r="1.6" fill="#18b818"/>
<rect x="1.5" y="12.5" width="8" height="6" fill="#f8f090" stroke="#e0a050" stroke-width="1"/><rect x="10.5" y="12.5" width="8" height="6" fill="#f8f090" stroke="#e0a050" stroke-width="1"/>
<path d="M3.5 16 Q5.5 14 8 15 M12.5 16 Q14.5 14 17 15" stroke="#60a0e0" stroke-width="1" fill="none"/></svg>
<svg style="position:absolute;left:10px;top:601px;" width="20" height="20" viewBox="0 0 20 20"><rect x="0.5" y="0.5" width="19" height="19" rx="1.5" fill="#e4e4e4" stroke="#a4a4a4" stroke-width="1"/>
<rect x="2" y="2" width="7" height="2.2" fill="#6a1010"/><rect x="11" y="2" width="7" height="2.2" fill="#6a1010"/>
<circle cx="3.5" cy="6.5" r="1.6" fill="#f0d810"/><circle cx="6.5" cy="6.5" r="1.6" fill="#e01818"/><circle cx="10" cy="6.5" r="1.4" fill="#c8c8c8"/><circle cx="13.5" cy="6.5" r="1.6" fill="#18b818"/><circle cx="17" cy="6.5" r="1.6" fill="#18b818"/>
<circle cx="3.5" cy="10" r="1.6" fill="#d01010"/><circle cx="6.5" cy="10" r="1.4" fill="#f4f4f4"/><circle cx="10" cy="10" r="1.4" fill="#f4f4f4"/><circle cx="13.5" cy="10" r="1.6" fill="#e8c010"/><circle cx="17" cy="10" r="1.6" fill="#18b818"/>
<rect x="1.5" y="12.5" width="8" height="6" fill="#f8f090" stroke="#e0a050" stroke-width="1"/><rect x="10.5" y="12.5" width="8" height="6" fill="#f8f090" stroke="#e0a050" stroke-width="1"/>
<path d="M3.5 16 Q5.5 14 8 15 M12.5 16 Q14.5 14 17 15" stroke="#60a0e0" stroke-width="1" fill="none"/></svg>
<svg style="position:absolute;left:110px;top:428px;" width="14" height="4" viewBox="0 0 14 4"><path d="M2.5 0.5 V3.5 M5.5 0.5 V3.5 M8.5 0.5 V3.5 M11.5 0.5 V3.5" stroke="#a0a0a0" stroke-width="1"/></svg>
<svg style="position:absolute;left:205px;top:364px;" width="4" height="12" viewBox="0 0 4 12"><path d="M1 1.5 H3 M1 4.5 H3 M1 7.5 H3 M1 10.5 H3" stroke="#888" stroke-width="1"/></svg>
<svg style="position:absolute;left:645px;top:364px;" width="4" height="12" viewBox="0 0 4 12"><path d="M1 1.5 H3 M1 4.5 H3 M1 7.5 H3 M1 10.5 H3" stroke="#888" stroke-width="1"/></svg>
<svg style="position:absolute;left:187px;top:459px;" width="16" height="16" viewBox="0 0 16 16"><path d="M4 10 H12 L8 6 Z" fill="#a8a8a8"/></svg>
<svg style="position:absolute;left:187px;top:542px;" width="16" height="16" viewBox="0 0 16 16"><path d="M4 6 H12 L8 10.5 Z" fill="#000"/></svg>
<svg style="position:absolute;left:31px;top:558px;" width="16" height="16" viewBox="0 0 16 16"><path d="M10 4 V12 L6 8 Z" fill="#a8a8a8"/></svg>
<svg style="position:absolute;left:170px;top:558px;" width="17" height="16" viewBox="0 0 17 16"><path d="M6.5 4 V12 L10.5 8 Z" fill="#000"/></svg>
<svg style="position:absolute;left:48px;top:558px;" width="35" height="16" viewBox="0 0 35 16"><path d="M13.5 4.5 V11.5 M15.5 4.5 V11.5 M17.5 4.5 V11.5 M19.5 4.5 V11.5" stroke="#8a8a8a" stroke-width="1"/></svg>
<svg style="position:absolute;left:627px;top:166px;" width="16" height="16" viewBox="0 0 16 16"><path d="M4 10 H12 L8 6 Z" fill="#a8a8a8"/></svg>
<svg style="position:absolute;left:627px;top:542px;" width="16" height="16" viewBox="0 0 16 16"><path d="M4 6 H12 L8 10.5 Z" fill="#000"/></svg>
<svg style="position:absolute;left:210px;top:558px;" width="16" height="16" viewBox="0 0 16 16"><path d="M10 4 V12 L6 8 Z" fill="#a8a8a8"/></svg>
<svg style="position:absolute;left:611px;top:558px;" width="16" height="16" viewBox="0 0 16 16"><path d="M6.5 4 V12 L10.5 8 Z" fill="#000"/></svg>
<svg style="position:absolute;left:627px;top:232px;" width="16" height="10" viewBox="0 0 16 10"><path d="M4.5 1.5 H11.5 M4.5 3.5 H11.5 M4.5 5.5 H11.5 M4.5 7.5 H11.5" stroke="#8a8a8a" stroke-width="1"/></svg>
<svg style="position:absolute;left:227px;top:558px;" width="53" height="16" viewBox="0 0 53 16"><path d="M22.5 4.5 V11.5 M24.5 4.5 V11.5 M26.5 4.5 V11.5 M28.5 4.5 V11.5" stroke="#8a8a8a" stroke-width="1"/></svg>
</body></html>
